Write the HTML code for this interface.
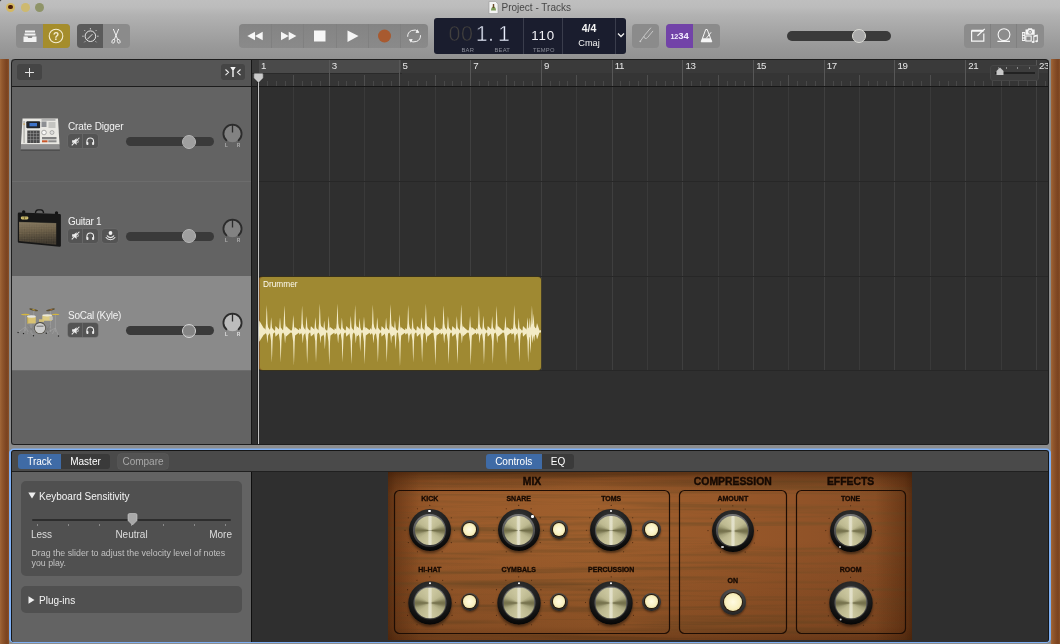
<!DOCTYPE html>
<html lang="en">
<head>
<meta charset="utf-8">
<title>Project - Tracks</title>
<style>
*{box-sizing:border-box;margin:0;padding:0}
html,body{width:1060px;height:644px;overflow:hidden}
body{position:relative;will-change:transform;font-family:"Liberation Sans",sans-serif;background:#8c8c8c;color:#fff}
.abs{position:absolute}
i{display:block}
#wood-l,#wood-r{position:absolute;top:59px;bottom:0;width:9px;background:linear-gradient(90deg,#a06639,#92582d 22%,#874e28 45%,#7d4521 68%,#7b431f 80%,#895028)}
#wood-l{left:0}
#wood-r{left:1051px}
#titlebar{position:absolute;left:0;top:0;width:1060px;height:60px;background:linear-gradient(#bfbfbf,#bcbcbc 12%,#b2b2b2 25%,#a6a6a6 50%,#9a9a9a 75%,#919191)}
.tl{position:absolute;top:2.7px;width:9px;height:9px;border-radius:50%}
.thin{-webkit-text-stroke:.55px #1a1d2e}
#title{position:absolute;top:1px;left:501.5px;font-size:10px;color:#474747;line-height:14px;white-space:nowrap}
.grp{position:absolute;top:24px;height:24px;border-radius:4px;overflow:hidden;background:#8b8b8b}
.grp>i{position:absolute;top:0;height:24px;display:block}
#lcd{position:absolute;left:434px;top:18px;width:191.5px;height:36px;background:#1a1d2e;border-radius:3px}
.lbl{font-size:5.8px;line-height:7px;color:#8b8e99;letter-spacing:.2px}
#tracks{position:absolute;left:11px;top:59px;width:1038px;height:386px;background:#2f2f2f;overflow:hidden;border-radius:4px 4px 3px 3px;border:1px solid #1c1c1c;border-width:0}
#tracks:after{content:"";position:absolute;left:0;top:0;right:0;bottom:0;border:1px solid #1e1e1e;border-radius:4px 4px 3px 3px;pointer-events:none}
#thead{position:absolute;left:0;top:0;width:240px;height:386px;background:#636363}
#thead-top{position:absolute;left:0;top:0;width:240px;height:28px;background:#555;border-bottom:1px solid #1c1c1c}
.sbtn{position:absolute;background:#454545;border-radius:3px}
.row{position:absolute;left:0;width:240px;border-bottom:1px solid #6c6c6c}
.row .name{position:absolute;left:57px;font-size:10px;line-height:12px;color:#f2f2f2;white-space:nowrap;letter-spacing:-.1px}
.ms{position:absolute;height:14px;border-radius:3px;background:#545454;box-shadow:0 0 0 .5px #6c6c6c}
.ms>i{position:absolute;left:14px;top:0;width:1px;height:14px;background:#666}
#divider{position:absolute;left:240px;top:0;width:7px;height:386px;background:#2f2f2f;border-left:1px solid #161616}
.rn{font-size:9.7px;line-height:12px;color:#e8e8e8;letter-spacing:-.4px}
#region{position:absolute;width:282px;height:93px;background:#9f8932;border-radius:3px;overflow:hidden;box-shadow:0 0 0 .5px #4a3f14,inset 1px 0 0 rgba(125,65,25,.7)}
#bottom{position:absolute;left:9px;top:449px;width:1042px;height:194.2px;border-radius:5px;background:#7fb0f4;padding:1px 2px 1.4px;box-shadow:0 -.5px 0 #7fb0f4}
#binner{position:relative;width:1038px;height:191.8px;border-radius:3px;background:#2f2f2f;border:1px solid #161616;border-bottom-width:0;overflow:hidden}
#tabbar{position:absolute;left:0;top:0;width:1036px;height:21px;background:#4a4a4a;border-bottom:1px solid #202020}
#insp{position:absolute;left:0;top:21px;width:240px;height:172px;background:#636363;border-right:1px solid #0e0e0e}
.seg{position:absolute;top:3px;height:15px;font-size:10px;line-height:15px;text-align:center;color:#fff}
.card{position:absolute;left:9px;width:220.5px;background:#505050;border-radius:5px}
.sl{font-size:10px;line-height:12px;color:#dcdcdc}
.kn{position:absolute;width:42px;height:42px;border-radius:50%;background:radial-gradient(circle at 50% 30%,#3c3c3c,#1a1a1a 55%,#060606 80%);box-shadow:0 2px 2.5px rgba(0,0,0,.45)}
.kn>b{position:absolute;left:4.7px;top:4.9px;width:32.6px;height:32.6px;border-radius:50%;background:linear-gradient(#777,#333)}
.kn>b:after{content:"";position:absolute;left:1.5px;top:1.5px;right:1.5px;bottom:1.5px;border-radius:50%;background:linear-gradient(90deg,rgba(255,255,255,0) 42%,rgba(250,250,246,.45) 47%,rgba(250,250,246,.45) 53%,rgba(255,255,255,0) 58%),conic-gradient(#cfcba4 0deg,#c6c29a 30deg,#bdb990 55deg,#a5a27a 70deg,#807c57 82deg,#726f49 90deg,#807c57 98deg,#a5a27a 110deg,#bbb78e 128deg,#c3bf96 150deg,#cfcba4 180deg,#c3bf96 210deg,#bbb78e 232deg,#a5a27a 250deg,#807c57 262deg,#726f49 270deg,#807c57 278deg,#a5a27a 290deg,#bdb990 305deg,#c6c29a 330deg,#cfcba4 360deg)}
.kn>i{position:absolute;width:2.6px;height:2.6px;border-radius:50%;background:#fff}
.led{position:absolute;border-radius:50%;background:radial-gradient(circle at 50% 25%,#5c5c5c,#343434 60%,#1a1a1a);box-shadow:0 1.5px 2px rgba(0,0,0,.4)}
.led>b{position:absolute;border-radius:50%;background:radial-gradient(circle,#fffbe2 0,#f8f0c0 55%,#e6d48c 90%,#b79c58 100%);box-shadow:0 0 0 1px #2a1a08}
</style>
</head>
<body>
<div id="titlebar">
  <div class="tl" style="left:5.900px;background:#d4b862"><b style="position:absolute;left:2.300px;top:2.300px;width:4.400px;height:4.400px;border-radius:50%;background:#4c1e0a"></b></div>
  <div class="tl" style="left:20.500px;background:#cdb970"></div>
  <div class="tl" style="left:35.100px;background:#8f9468"></div>
  <i class="abs" style="left:0;top:0;width:2px;height:2px;background:radial-gradient(circle at 100% 100%,transparent 1.500px,#4a4a4a 2px)"></i>
  <svg class="abs" style="left:488px;top:1px" width="11" height="13" viewBox="0 0 11 13"><path d="M1 .5h6.5L10 3v9.500H1z" fill="#f4f4f4" stroke="#999" stroke-width=".6"/><path d="M3 9.500c0-2 1-4 2.500-4s2.500 2 2.500 4z" fill="#7c9a56"/><rect x="4.800" y="3" width="1.400" height="4" fill="#6b4a2a"/></svg>
  <div id="title">Project - Tracks</div>

  <!-- left button groups -->
  <div class="grp" style="left:16px;width:54px">
    <i style="left:27px;width:27px;background:#a58d2c"></i>
    <svg class="abs" style="left:6px;top:5px" width="16" height="15" viewBox="0 0 16 15"><path d="M3 1.500h10v2H3zM2.500 4.500h11v2h-11z" fill="#f2f2f2"/><path d="M1.500 7.500h4l.7 1.600h3.600l.7-1.600h4v5.500h-13z" fill="#f2f2f2"/></svg>
    <svg class="abs" style="left:31px;top:3px" width="18" height="18" viewBox="0 0 18 18"><circle cx="9" cy="9" r="6.800" fill="none" stroke="#f4ecd0" stroke-width="1.100"/><text x="9" y="12.600" font-family="Liberation Sans, sans-serif" font-size="10" font-weight="bold" fill="#f4ecd0" text-anchor="middle">?</text></svg>
  </div>
  <div class="grp" style="left:77px;width:53px">
    <i style="left:0;width:26px;background:#5b5b5b"></i>
    <svg class="abs" style="left:3px;top:2px" width="20" height="20" viewBox="0 0 20 20"><circle cx="10.400" cy="10.200" r="5.300" fill="none" stroke="#ececec" stroke-width=".95"/><path d="M7.200 13.400l5.200-5.200" stroke="#ececec" stroke-width=".95"/><g stroke="#d8d8d8" stroke-width=".9" stroke-linecap="round"><path d="M10.400 2.400v.7M4.600 4.400l.4.400M16.200 4.400l-.4.400M2.600 10.200h.7M17.500 10.200h.7M4.600 16l.4-.4M16.200 16l-.4-.4"/></g></svg>
    <svg class="abs" style="left:31px;top:3px" width="16" height="19" viewBox="0 0 16 19"><path d="M5.300 2l4.600 11M10.700 2L6.100 13" stroke="#f2f2f2" stroke-width="1" fill="none"/><ellipse cx="5.300" cy="14.300" rx="1.300" ry="2" fill="none" stroke="#f2f2f2" stroke-width=".9" transform="rotate(20 5.300 14.300)"/><ellipse cx="10.700" cy="14.300" rx="1.300" ry="2" fill="none" stroke="#f2f2f2" stroke-width=".9" transform="rotate(-20 10.700 14.300)"/></svg>
  </div>

  <!-- transport -->
  <div class="grp" style="left:239px;width:189px;background:linear-gradient(#848484,#8a8a8a)">
    <i style="left:32px;width:1px;background:#808080"></i><i style="left:64px;width:1px;background:#808080"></i><i style="left:97px;width:1px;background:#808080"></i><i style="left:129px;width:1px;background:#808080"></i><i style="left:161px;width:1px;background:#808080"></i>
    <svg class="abs" style="left:0;top:0" width="189" height="24" viewBox="0 0 189 24">
      <path d="M16 7.800v8.400L8.300 12zM23.700 7.800v8.400L16 12z" fill="#f6f6f6"/>
      <path d="M42 7.800v8.400L49.700 12zM49.700 7.800v8.400L57.400 12z" fill="#f6f6f6"/>
      <rect x="75" y="6.500" width="11.500" height="11" fill="#f6f6f6"/>
      <path d="M108.500 6.500v11.500L119.500 12z" fill="#f6f6f6"/>
      <circle cx="145.500" cy="12" r="6.500" fill="#a85a30"/>
      <g fill="none" stroke="#f2f2f2" stroke-width="1"><path d="M168.700 12.800a6.400 6.400 0 0 1 11-4.800"/><path d="M181.500 11.200a6.400 6.400 0 0 1 -11 4.800"/></g>
      <path d="M178.300 5.300l2 3.400-3.800.2z" fill="#f2f2f2"/><path d="M171.900 18.700l-2-3.400 3.800-.2z" fill="#f2f2f2"/>
    </svg>
  </div>

  <!-- LCD -->
  <div id="lcd">
    <i class="abs" style="left:89px;top:0;width:1px;height:36px;background:#3a3d4c"></i>
    <i class="abs" style="left:128px;top:0;width:1px;height:36px;background:#3a3d4c"></i>
    <i class="abs" style="left:181px;top:0;width:1px;height:36px;background:#3a3d4c"></i>
    <div class="abs thin" style="left:14.500px;top:4.300px;font-size:21.500px;line-height:24px;color:#42403e;letter-spacing:.6px">00</div>
    <div class="abs thin" style="left:41.800px;top:4.300px;font-size:21.500px;line-height:24px;color:#e9eefc;letter-spacing:.15px;word-spacing:-2.200px;white-space:nowrap">1. 1</div>
    <div class="abs lbl" style="left:27.500px;top:28.500px">BAR</div>
    <div class="abs lbl" style="left:60.500px;top:28.500px">BEAT</div>
    <div class="abs" style="left:97.300px;top:8.800px;font-size:13.300px;line-height:18px;color:#f2f2f6;letter-spacing:.85px">110</div>
    <div class="abs lbl" style="left:99px;top:28.500px">TEMPO</div>
    <div class="abs" style="left:128px;top:4px;width:54px;text-align:center;font-size:10.500px;line-height:12px;color:#f4f4f4;font-weight:bold">4/4</div>
    <div class="abs" style="left:128px;top:19.300px;width:54px;text-align:center;font-size:9.200px;line-height:12px;color:#f4f4f4">Cmaj</div>
    <svg class="abs" style="left:183px;top:13px" width="8" height="8" viewBox="0 0 8 8"><path d="M1 2.500l3 3 3-3" fill="none" stroke="#f0f0f0" stroke-width="1.300"/></svg>
  </div>

  <!-- tuner -->
  <div class="grp" style="left:632.300px;width:27px;background:#8b8b8b">
    <svg class="abs" style="left:0;top:0" width="27" height="24" viewBox="0 0 27 24"><g fill="none" stroke="#cacaca" stroke-width=".95" stroke-linecap="round"><path d="M8.500 17l3.200-4.500"/><path d="M18.700 4l-6.200 7.300q-1.400 1.700.2 2.900q1.500 1.100 2.900-.7l5.200-6.300"/></g><circle cx="8.300" cy="17.300" r=".9" fill="#cacaca"/></svg>
  </div>
  <!-- count-in / metronome -->
  <div class="grp" style="left:666px;width:54px;background:#8b8b8b">
    <i style="left:0;width:27px;background:#7243a8"></i>
    <div class="abs" style="left:0;top:5px;width:27px;text-align:center;font-size:9.500px;line-height:14px;color:#f3ecff;white-space:nowrap;font-weight:bold;letter-spacing:-.1px"><span style="font-size:7.200px">12</span>34</div>
    <svg class="abs" style="left:27px;top:0" width="27" height="24" viewBox="0 0 27 24"><path d="M12.700 5.500h1.500l4.600 12.300H8.200z" fill="none" stroke="#f6f6f6" stroke-width="1"/><path d="M9.300 14.200h8.300l1.300 3.700H8z" fill="#f6f6f6"/><path d="M13.300 14.300l4.800-6" stroke="#f6f6f6" stroke-width="1"/></svg>
  </div>

  <!-- master volume -->
  <div class="abs" style="left:787px;top:31px;width:104px;height:10px;border-radius:5px;background:#3a3a3a"></div>
  <div class="abs" style="left:852px;top:29px;width:14px;height:14px;border-radius:50%;background:#a9a9a9;border:1px solid #deded8"></div>

  <!-- right group -->
  <div class="grp" style="left:964px;width:80px;background:#8c8c8c">
    <i style="left:26px;width:1px;background:#808080"></i><i style="left:52px;width:1px;background:#808080"></i>
    <svg class="abs" style="left:0;top:0" width="80" height="24" viewBox="0 0 80 24">
      <g fill="none" stroke="#f6f6f6"><path d="M7.500 6.800h12" stroke-width="2"/><path d="M7.600 6.500v10.600h12.200V9.500" stroke-width="1.200"/><path d="M13.400 11.700l7.400-6.800" stroke-width="1.200"/></g>
      <g fill="none" stroke="#f6f6f6" stroke-width="1.100"><circle cx="40" cy="10.600" r="5.900"/><path d="M33.400 17.400h12.600"/></g>
      <g fill="#f6f6f6"><rect x="58" y="8" width="3.200" height="9"/><rect x="58.800" y="9.300" width="1.500" height="1.400" fill="#8c8c8c"/><rect x="58.800" y="12" width="1.500" height="1.400" fill="#8c8c8c"/><rect x="58.800" y="14.600" width="1.500" height="1.400" fill="#8c8c8c"/>
      <path d="M61.500 5.500h2l.8-1.300h3.600l.8 1.300h2v5.300h-9.200z"/><circle cx="66.100" cy="7.900" r="1.800" fill="#8c8c8c"/><circle cx="66.100" cy="7.900" r=".8"/>
      <rect x="61.800" y="12" width="5.400" height="5" fill="none" stroke="#f6f6f6" stroke-width="1.100"/>
      <path d="M69.300 11.500l4.500-.9v6.300h-1v-4.300l-2.500.5v5h-1z"/><ellipse cx="69.100" cy="18" rx="1.500" ry="1.100"/><ellipse cx="72.600" cy="17.200" rx="1.400" ry="1.050"/></g>
    </svg>
  </div>
</div>
<div id="wood-l"></div><div id="wood-r"></div>
<div id="tracks">
<div id="thead">
<div id="thead-top"><div class="sbtn" style="left:6px;top:5px;width:25px;height:16px"><svg class="abs" style="left:7px;top:3px" width="11" height="11" viewBox="0 0 11 11" shape-rendering="crispEdges"><rect x="5" y="1" width="1" height="9" fill="#e4e4e4"/><rect x="1" y="5" width="9" height="1" fill="#e4e4e4"/></svg></div>
<div class="sbtn" style="left:210px;top:5px;width:24px;height:16px"><svg class="abs" style="left:2px;top:2px" width="20" height="12" viewBox="0 0 20 12"><path d="M2.500 3.500l3 2.800-3 2.800M17.500 3.500l-3 2.800 3 2.800" fill="none" stroke="#eee" stroke-width="1.100"/><path d="M7.300 1h5.400L10.700 4.200V11H9.300V4.200z" fill="#f4f4f4"/></svg></div></div>
<div class="row" style="top:28px;height:95px;background:transparent"><div class="abs" style="left:0;top:0px"><svg class="abs" style="left:9px;top:30px" width="42" height="36" viewBox="0 0 42 36"><path d="M2.500 1.500h35.500l1.500 26H1z" fill="#e9e8e3"/><path d="M1 27.500h38.500l.3 5.500H.7z" fill="#8e8e8e"/><rect x=".7" y="32.500" width="39.200" height="1" fill="#3d3d3d"/><rect x="6.300" y="4.300" width="13.800" height="7" rx="1" fill="#23262b"/><rect x="9.500" y="6" width="7.500" height="3.300" fill="#3f74c9"/><rect x="7.300" y="13.500" width="12.400" height="12.500" fill="#4b4b4b"/><rect x="10.15" y="13.500" width=".5" height="12.500" fill="#9a9a9a"/><rect x="7.300" y="16.35" width="12.400" height=".5" fill="#9a9a9a"/><rect x="13.25" y="13.500" width=".5" height="12.500" fill="#9a9a9a"/><rect x="7.300" y="19.45" width="12.400" height=".5" fill="#9a9a9a"/><rect x="16.35" y="13.500" width=".5" height="12.500" fill="#9a9a9a"/><rect x="7.300" y="22.55" width="12.400" height=".5" fill="#9a9a9a"/><rect x="3.300" y="4" width="1.600" height="22" fill="#b9b8b2"/><rect x="3.500" y="6.500" width="1.200" height="1.200" fill="#d79a2b"/><rect x="21.500" y="4.500" width="5" height="5.500" fill="#8d8f93"/><rect x="28.500" y="5" width="7" height="6" fill="#c4c4c0"/><rect x="21.500" y="2.300" width="14" height="1.300" fill="#9fa0a0"/><circle cx="24" cy="15.500" r="2.300" fill="#f7f7f5" stroke="#8a8a8a" stroke-width=".7"/><circle cx="32" cy="15.500" r="2" fill="#dcdcda" stroke="#8a8a8a" stroke-width=".6"/><rect x="22" y="20" width="14.500" height="2.300" fill="#7f7f7f"/><rect x="22" y="23.300" width="5.500" height="2" fill="#c8562a"/><rect x="28.300" y="23.300" width="8.200" height="2" fill="#8b8b8b"/></svg><div class="name" style="top:34px;letter-spacing:-0.1px">Crate Digger</div><div class="ms" style="left:57px;top:47px;width:30px"><svg class="abs" style="left:3px;top:2.500px" width="9" height="9" viewBox="0 0 12 12"><path d="M1.500 4.300h2.500L7.500 1.500v9L4 7.700H1.500z" fill="#ececec"/><path d="M1 11.200L11.200 1" stroke="#ececec" stroke-width="1.400"/><path d="M8.800 4a3 3 0 0 1 0 4" fill="none" stroke="#ececec" stroke-width="1.100"/></svg><i></i><svg class="abs" style="left:17.300px;top:2px" width="10.500" height="10.500" viewBox="0 0 12 12"><path d="M2.200 8.500V6a3.800 3.800 0 0 1 7.600 0v2.500" fill="none" stroke="#ececec" stroke-width="1.250"/><rect x="1.600" y="6.800" width="2.300" height="3.500" rx=".9" fill="#ececec"/><rect x="8.100" y="6.800" width="2.300" height="3.500" rx=".9" fill="#ececec"/></svg></div><div class="abs" style="left:115px;top:50px;width:88px;height:9px;border-radius:4.500px;background:#3a3a3a"></div><div class="abs" style="left:171px;top:47.500px;width:14px;height:14px;border-radius:50%;background:#9f9f9f;border:1px solid #b8b8b8"></div><svg class="abs" style="left:209px;top:34px" width="25" height="30" viewBox="0 0 25 30"><circle cx="12.500" cy="12.700" r="8.600" fill="#828282"/><path d="M6.9 19.87A9.100 9.100 0 1 1 18.1 19.87" fill="none" stroke="#2c2c2c" stroke-width="1.800"/><path d="M12.500 3.500v8" stroke="#2c2c2c" stroke-width="1.300"/><text x="5" y="26" font-family="Liberation Sans, sans-serif" font-size="4.500" fill="#b4b4b4" font-weight="bold">L</text><text x="17" y="26" font-family="Liberation Sans, sans-serif" font-size="4.500" fill="#b4b4b4" font-weight="bold">R</text></svg></div></div>
<div class="row" style="top:123px;height:95px;background:transparent"><div class="abs" style="left:0;top:-0.33px"><svg class="abs" style="left:5px;top:26px" width="46" height="40" viewBox="0 0 46 40"><defs><linearGradient id="ampg" x1="0" y1="0" x2="0.15" y2="1"><stop offset="0" stop-color="#8a7c63"/><stop offset=".45" stop-color="#76684f"/><stop offset="1" stop-color="#4a4236"/></linearGradient><pattern id="ampp" width="2.4" height="2.4" patternUnits="userSpaceOnUse" patternTransform="rotate(45)"><rect width="1.2" height="1.2" fill="#1c1a16" opacity=".5"/><rect x="1.2" y="1.200" width="1.200" height="1.200" fill="#1c1a16" opacity=".5"/></pattern><linearGradient id="ampf" x1="0" y1="0" x2="0" y2="1"><stop offset="0" stop-color="#fff" stop-opacity="0"/><stop offset=".35" stop-color="#fff" stop-opacity=".15"/><stop offset="1" stop-color="#fff" stop-opacity="1"/></linearGradient><mask id="ampm"><rect width="46" height="40" fill="url(#ampf)"/></mask></defs><path d="M19.400 5q.3-3.200 2.600-3.200h3q2.300 0 2.600 3.300" fill="none" stroke="#161616" stroke-width="1.300"/><circle cx="7.700" cy="3.900" r="1.700" fill="#141414"/><circle cx="40.500" cy="5" r="1.700" fill="#141414"/><path d="M3 4.500L43.700 6q1.200.1 1.200 1.300V37.500q0 1.400-1.400 1.300L3 34.800Q1.800 34.700 1.800 33.500V5.700Q1.800 4.500 3 4.500z" fill="#171717"/><path d="M3 14.300L40.200 15.500V36.800L3 33z" fill="url(#ampg)"/><path d="M3 14.300L40.200 15.500V36.800L3 33z" fill="url(#ampp)" mask="url(#ampm)"/><path d="M3 14.300L40.200 15.500" stroke="#8d8164" stroke-width=".6"/><rect x="4.800" y="8.400" width="7.600" height="3" rx="1.300" fill="#d6c678"/><rect x="8.300" y="8.400" width=".7" height="3" fill="#5b4e1c"/><rect x="5.800" y="9.600" width="5.600" height=".6" fill="#8a7a34"/></svg><div class="name" style="top:34px;letter-spacing:-0.3px">Guitar 1</div><div class="ms" style="left:57px;top:47px;width:30px"><svg class="abs" style="left:3px;top:2.500px" width="9" height="9" viewBox="0 0 12 12"><path d="M1.500 4.300h2.500L7.500 1.500v9L4 7.700H1.500z" fill="#ececec"/><path d="M1 11.200L11.200 1" stroke="#ececec" stroke-width="1.400"/><path d="M8.800 4a3 3 0 0 1 0 4" fill="none" stroke="#ececec" stroke-width="1.100"/></svg><i></i><svg class="abs" style="left:17.300px;top:2px" width="10.500" height="10.500" viewBox="0 0 12 12"><path d="M2.200 8.500V6a3.800 3.800 0 0 1 7.600 0v2.500" fill="none" stroke="#ececec" stroke-width="1.250"/><rect x="1.600" y="6.800" width="2.300" height="3.500" rx=".9" fill="#ececec"/><rect x="8.100" y="6.800" width="2.300" height="3.500" rx=".9" fill="#ececec"/></svg></div><div class="ms" style="left:91px;top:47px;width:16px"><svg class="abs" style="left:1.500px;top:.500px" width="13" height="13" viewBox="0 0 13 13"><circle cx="6.500" cy="4" r="1.900" fill="#f0f0f0"/><path d="M3 6.600a4 4 0 0 0 7 0M1.800 8.300a5.800 5.800 0 0 0 9.400 0" fill="none" stroke="#ececec" stroke-width="1.100"/></svg></div><div class="abs" style="left:115px;top:50px;width:88px;height:9px;border-radius:4.500px;background:#3a3a3a"></div><div class="abs" style="left:171px;top:47.500px;width:14px;height:14px;border-radius:50%;background:#9f9f9f;border:1px solid #b8b8b8"></div><svg class="abs" style="left:209px;top:34px" width="25" height="30" viewBox="0 0 25 30"><circle cx="12.500" cy="12.700" r="8.600" fill="#828282"/><path d="M6.9 19.87A9.100 9.100 0 1 1 18.1 19.87" fill="none" stroke="#2c2c2c" stroke-width="1.800"/><path d="M12.500 3.500v8" stroke="#2c2c2c" stroke-width="1.300"/><text x="5" y="26" font-family="Liberation Sans, sans-serif" font-size="4.500" fill="#b4b4b4" font-weight="bold">L</text><text x="17" y="26" font-family="Liberation Sans, sans-serif" font-size="4.500" fill="#b4b4b4" font-weight="bold">R</text></svg></div></div>
<div class="row" style="top:217px;height:95px;background:#8a8a8a"><div class="abs" style="left:0;top:0.33px"><svg class="abs" style="left:5px;top:29px" width="48" height="34" viewBox="0 0 48 34"><g stroke="#a3a3a3" stroke-width=".7" fill="none" opacity=".9"><path d="M9.300 9.500V26M9.300 22L2 27.300M9.300 22L7.500 28.300M9.300 22l3 5M39.400 9.500V27M39.400 23l-9 5M39.400 23l3.100 7.800M39.400 23l-3 6M15 18.500v9l2.500 2.800M15 25l-4 3.500M34.500 16v11M17.700 5.500v6M34.500 5.500v5"/></g><g stroke="#7b7b7b" stroke-width=".6" fill="none"><path d="M11.500 20l7 8M19 20l-7 8M29 20l5 8M34 20l-5 8M12 24h7M29 24h6"/></g><ellipse cx="17.700" cy="4.800" rx="4.600" ry=".9" fill="#5b4f30" transform="rotate(13 17.700 4.800)"/><ellipse cx="17.700" cy="4.800" rx="1.600" ry=".5" fill="#c9a63c" transform="rotate(13 17.700 4.800)"/><ellipse cx="34.500" cy="4.800" rx="4.600" ry=".9" fill="#5b4f30" transform="rotate(-13 34.500 4.800)"/><ellipse cx="35" cy="4.700" rx="1.600" ry=".5" fill="#a66a30" transform="rotate(-13 35 4.700)"/><ellipse cx="9.300" cy="9.400" rx="4.300" ry=".75" fill="#d3b53f"/><ellipse cx="39.600" cy="9.400" rx="3.700" ry=".6" fill="#d3b53f"/><rect x="11" y="11.500" width="8.800" height="7" rx=".8" fill="#d9c272"/><rect x="11" y="11.500" width="1.200" height="7" fill="#b9a65a"/><ellipse cx="15.400" cy="11.500" rx="4.400" ry="1.200" fill="#e4e4e0"/><rect x="26.300" y="10.300" width="9.800" height="5.500" rx=".8" fill="#dccb84"/><ellipse cx="31.200" cy="10.300" rx="4.900" ry="1.100" fill="#e9e7d8"/><rect x="33.500" y="11.500" width="3.600" height="3.500" fill="#bdbdbd" opacity=".8"/><rect x="23" y="14.300" width="5" height="2.600" fill="#d8c473" opacity=".9"/><circle cx="24" cy="23" r="5.900" fill="#4e4a40"/><circle cx="24" cy="23.100" r="5.200" fill="#cdcdcd"/><path d="M20.500 21.200h7" stroke="#444" stroke-width=".7"/><g fill="#242424"><circle cx="2.100" cy="27.500" r=".7"/><circle cx="7.500" cy="28.500" r=".7"/><circle cx="17.500" cy="30.700" r=".7"/><circle cx="30.300" cy="28.300" r=".7"/><circle cx="42.500" cy="31" r=".7"/></g></svg><div class="name" style="top:34px;letter-spacing:-0.25px">SoCal (Kyle)</div><div class="ms" style="left:57px;top:47px;width:30px"><svg class="abs" style="left:3px;top:2.500px" width="9" height="9" viewBox="0 0 12 12"><path d="M1.500 4.300h2.500L7.500 1.500v9L4 7.700H1.500z" fill="#ececec"/><path d="M1 11.200L11.200 1" stroke="#ececec" stroke-width="1.400"/><path d="M8.800 4a3 3 0 0 1 0 4" fill="none" stroke="#ececec" stroke-width="1.100"/></svg><i></i><svg class="abs" style="left:17.300px;top:2px" width="10.500" height="10.500" viewBox="0 0 12 12"><path d="M2.200 8.500V6a3.800 3.800 0 0 1 7.600 0v2.500" fill="none" stroke="#ececec" stroke-width="1.250"/><rect x="1.600" y="6.800" width="2.300" height="3.500" rx=".9" fill="#ececec"/><rect x="8.100" y="6.800" width="2.300" height="3.500" rx=".9" fill="#ececec"/></svg></div><div class="abs" style="left:115px;top:50px;width:88px;height:9px;border-radius:4.500px;background:#3a3a3a"></div><div class="abs" style="left:171px;top:47.500px;width:14px;height:14px;border-radius:50%;background:rgba(150,150,150,.82);border:1px solid #d6d6d6"></div><svg class="abs" style="left:209px;top:34px" width="25" height="30" viewBox="0 0 25 30"><circle cx="12.500" cy="12.700" r="8.600" fill="#bcbcbc"/><path d="M6.9 19.87A9.100 9.100 0 1 1 18.1 19.87" fill="none" stroke="#2c2c2c" stroke-width="1.800"/><path d="M12.500 3.500v8" stroke="#2c2c2c" stroke-width="1.300"/><text x="5" y="26" font-family="Liberation Sans, sans-serif" font-size="4.500" fill="#e6e6e6" font-weight="bold">L</text><text x="17" y="26" font-family="Liberation Sans, sans-serif" font-size="4.500" fill="#e6e6e6" font-weight="bold">R</text></svg></div></div>
</div>
<div id="divider"></div>
<div class="abs" style="left:241px;top:1px;width:797px;height:13px;background:#3a3a3a"></div>
<div class="abs" style="left:241px;top:14px;width:797px;height:13px;background:#353535"></div>
<div class="abs" style="left:248px;top:1px;width:142px;height:13px;background:#4a4a4a;border-radius:0 0 3px 0"></div>
<div class="abs" style="left:241px;top:14px;width:150px;height:1px;background:#2a2a2a"></div>
<svg class="abs" style="left:0;top:0" width="1038" height="386" viewBox="0 0 1038 386" shape-rendering="crispEdges"><rect x="256" y="22" width="1" height="5" fill="#484848"/><rect x="265" y="22" width="1" height="5" fill="#484848"/><rect x="274" y="22" width="1" height="5" fill="#484848"/><rect x="282" y="28" width="1" height="283" fill="#3a3a3a"/><rect x="282" y="16" width="1" height="11" fill="#4e4e4e"/><rect x="291" y="22" width="1" height="5" fill="#484848"/><rect x="300" y="22" width="1" height="5" fill="#484848"/><rect x="309" y="22" width="1" height="5" fill="#484848"/><rect x="318" y="28" width="1" height="283" fill="#3f3f3f"/><rect x="318" y="1" width="1" height="26" fill="#575757"/><rect x="327" y="22" width="1" height="5" fill="#484848"/><rect x="335" y="22" width="1" height="5" fill="#484848"/><rect x="344" y="22" width="1" height="5" fill="#484848"/><rect x="353" y="28" width="1" height="283" fill="#3a3a3a"/><rect x="353" y="16" width="1" height="11" fill="#4e4e4e"/><rect x="362" y="22" width="1" height="5" fill="#484848"/><rect x="371" y="22" width="1" height="5" fill="#484848"/><rect x="380" y="22" width="1" height="5" fill="#484848"/><rect x="388" y="28" width="1" height="283" fill="#3f3f3f"/><rect x="388" y="1" width="1" height="26" fill="#575757"/><rect x="397" y="22" width="1" height="5" fill="#484848"/><rect x="406" y="22" width="1" height="5" fill="#484848"/><rect x="415" y="22" width="1" height="5" fill="#484848"/><rect x="424" y="28" width="1" height="283" fill="#3a3a3a"/><rect x="424" y="16" width="1" height="11" fill="#4e4e4e"/><rect x="433" y="22" width="1" height="5" fill="#484848"/><rect x="441" y="22" width="1" height="5" fill="#484848"/><rect x="450" y="22" width="1" height="5" fill="#484848"/><rect x="459" y="28" width="1" height="283" fill="#3f3f3f"/><rect x="459" y="1" width="1" height="26" fill="#575757"/><rect x="468" y="22" width="1" height="5" fill="#484848"/><rect x="477" y="22" width="1" height="5" fill="#484848"/><rect x="486" y="22" width="1" height="5" fill="#484848"/><rect x="495" y="28" width="1" height="283" fill="#3a3a3a"/><rect x="495" y="16" width="1" height="11" fill="#4e4e4e"/><rect x="503" y="22" width="1" height="5" fill="#484848"/><rect x="512" y="22" width="1" height="5" fill="#484848"/><rect x="521" y="22" width="1" height="5" fill="#484848"/><rect x="530" y="28" width="1" height="283" fill="#3f3f3f"/><rect x="530" y="1" width="1" height="26" fill="#575757"/><rect x="539" y="22" width="1" height="5" fill="#484848"/><rect x="548" y="22" width="1" height="5" fill="#484848"/><rect x="556" y="22" width="1" height="5" fill="#484848"/><rect x="565" y="28" width="1" height="283" fill="#3a3a3a"/><rect x="565" y="16" width="1" height="11" fill="#4e4e4e"/><rect x="574" y="22" width="1" height="5" fill="#484848"/><rect x="583" y="22" width="1" height="5" fill="#484848"/><rect x="592" y="22" width="1" height="5" fill="#484848"/><rect x="601" y="28" width="1" height="283" fill="#3f3f3f"/><rect x="601" y="1" width="1" height="26" fill="#575757"/><rect x="609" y="22" width="1" height="5" fill="#484848"/><rect x="618" y="22" width="1" height="5" fill="#484848"/><rect x="627" y="22" width="1" height="5" fill="#484848"/><rect x="636" y="28" width="1" height="283" fill="#3a3a3a"/><rect x="636" y="16" width="1" height="11" fill="#4e4e4e"/><rect x="645" y="22" width="1" height="5" fill="#484848"/><rect x="654" y="22" width="1" height="5" fill="#484848"/><rect x="662" y="22" width="1" height="5" fill="#484848"/><rect x="671" y="28" width="1" height="283" fill="#3f3f3f"/><rect x="671" y="1" width="1" height="26" fill="#575757"/><rect x="680" y="22" width="1" height="5" fill="#484848"/><rect x="689" y="22" width="1" height="5" fill="#484848"/><rect x="698" y="22" width="1" height="5" fill="#484848"/><rect x="707" y="28" width="1" height="283" fill="#3a3a3a"/><rect x="707" y="16" width="1" height="11" fill="#4e4e4e"/><rect x="716" y="22" width="1" height="5" fill="#484848"/><rect x="724" y="22" width="1" height="5" fill="#484848"/><rect x="733" y="22" width="1" height="5" fill="#484848"/><rect x="742" y="28" width="1" height="283" fill="#3f3f3f"/><rect x="742" y="1" width="1" height="26" fill="#575757"/><rect x="751" y="22" width="1" height="5" fill="#484848"/><rect x="760" y="22" width="1" height="5" fill="#484848"/><rect x="769" y="22" width="1" height="5" fill="#484848"/><rect x="777" y="28" width="1" height="283" fill="#3a3a3a"/><rect x="777" y="16" width="1" height="11" fill="#4e4e4e"/><rect x="786" y="22" width="1" height="5" fill="#484848"/><rect x="795" y="22" width="1" height="5" fill="#484848"/><rect x="804" y="22" width="1" height="5" fill="#484848"/><rect x="813" y="28" width="1" height="283" fill="#3f3f3f"/><rect x="813" y="1" width="1" height="26" fill="#575757"/><rect x="822" y="22" width="1" height="5" fill="#484848"/><rect x="830" y="22" width="1" height="5" fill="#484848"/><rect x="839" y="22" width="1" height="5" fill="#484848"/><rect x="848" y="28" width="1" height="283" fill="#3a3a3a"/><rect x="848" y="16" width="1" height="11" fill="#4e4e4e"/><rect x="857" y="22" width="1" height="5" fill="#484848"/><rect x="866" y="22" width="1" height="5" fill="#484848"/><rect x="875" y="22" width="1" height="5" fill="#484848"/><rect x="883" y="28" width="1" height="283" fill="#3f3f3f"/><rect x="883" y="1" width="1" height="26" fill="#575757"/><rect x="892" y="22" width="1" height="5" fill="#484848"/><rect x="901" y="22" width="1" height="5" fill="#484848"/><rect x="910" y="22" width="1" height="5" fill="#484848"/><rect x="919" y="28" width="1" height="283" fill="#3a3a3a"/><rect x="919" y="16" width="1" height="11" fill="#4e4e4e"/><rect x="928" y="22" width="1" height="5" fill="#484848"/><rect x="937" y="22" width="1" height="5" fill="#484848"/><rect x="945" y="22" width="1" height="5" fill="#484848"/><rect x="954" y="28" width="1" height="283" fill="#3f3f3f"/><rect x="954" y="1" width="1" height="26" fill="#575757"/><rect x="963" y="22" width="1" height="5" fill="#484848"/><rect x="972" y="22" width="1" height="5" fill="#484848"/><rect x="981" y="22" width="1" height="5" fill="#484848"/><rect x="990" y="28" width="1" height="283" fill="#3a3a3a"/><rect x="990" y="16" width="1" height="11" fill="#4e4e4e"/><rect x="998" y="22" width="1" height="5" fill="#484848"/><rect x="1007" y="22" width="1" height="5" fill="#484848"/><rect x="1016" y="22" width="1" height="5" fill="#484848"/><rect x="1025" y="28" width="1" height="283" fill="#3f3f3f"/><rect x="1025" y="1" width="1" height="26" fill="#575757"/><rect x="1034" y="22" width="1" height="5" fill="#484848"/><rect x="248" y="122" width="790" height="1" fill="#272727"/><rect x="248" y="217" width="790" height="1" fill="#272727"/><rect x="248" y="311" width="790" height="1" fill="#272727"/><rect x="240" y="27" width="798" height="1" fill="#171717"/></svg>
<div class="abs rn" style="left:250.1px;top:.900px">1</div>
<div class="abs rn" style="left:320.82px;top:.900px">3</div>
<div class="abs rn" style="left:391.54px;top:.900px">5</div>
<div class="abs rn" style="left:462.26px;top:.900px">7</div>
<div class="abs rn" style="left:532.98px;top:.900px">9</div>
<div class="abs rn" style="left:603.7px;top:.900px">11</div>
<div class="abs rn" style="left:674.42px;top:.900px">13</div>
<div class="abs rn" style="left:745.14px;top:.900px">15</div>
<div class="abs rn" style="left:815.86px;top:.900px">17</div>
<div class="abs rn" style="left:886.58px;top:.900px">19</div>
<div class="abs rn" style="left:957.3px;top:.900px">21</div>
<div class="abs rn" style="left:1028.02px;top:.900px">23</div>
<div id="region" style="left:248px;top:218px"><svg class="abs" style="left:0;top:0" width="282" height="93" viewBox="0 0 282 93"><path d="M0,50.83 0.25,43.58 0.5,44.01 0.75,44.43 1,44.85 1.25,45.28 1.5,45.7 1.75,46.12 2,46.55 2.25,46.97 2.5,47.39 2.75,47.82 3,48.24 3.25,48.66 3.5,49.08 3.75,49.51 4,49.93 4.25,50.35 4.5,50.78 4.75,51.2 5,51.12 5.25,51.23 5.5,51.48 5.75,51.73 6,51.98 6.25,52.23 6.5,52.48 6.75,52.73 7,52.98 7.25,53.22 7.5,53.16 7.75,53.25 8,53.31 8.25,53.18 8.5,51.8 8.75,50.01 9,50.33 9.25,50.66 9.5,50.98 9.75,51.3 10,51.62 10.25,51.94 10.5,52.26 10.75,52.58 11,52.91 11.25,53.23 11.5,53.19 11.75,53.46 12,53.42 12.25,53.12 12.5,53.51 12.75,53.39 13,51.93 13.25,51.1 13.5,51.4 13.75,51.69 14,51.98 14.25,52.27 14.5,52.56 14.75,52.85 15,53.15 15.25,53.44 15.5,53.57 15.75,53.5 16,53.4 16.25,51.11 16.5,49.02 16.75,49.27 17,49.52 17.25,49.77 17.5,50.02 17.75,50.27 18,50.52 18.25,50.77 18.5,51.02 18.75,51.27 19,51.52 19.25,51.77 19.5,52.02 19.75,52.27 20,52.52 20.25,52.77 20.5,53.02 20.75,53.27 21,53.44 21.25,53.19 21.5,53.17 21.75,52.46 22,51 22.25,51.29 22.5,51.58 22.75,51.87 23,52.17 23.25,52.46 23.5,52.75 23.75,53.04 24,53.33 24.25,53.29 24.5,53.18 24.75,53.27 25,53.56 25.25,53.15 25.5,53.22 25.75,53.51 26,53.43 26.25,53.11 26.5,51.93 26.75,49.64 27,49.16 27.25,49.39 27.5,49.62 27.75,49.85 28,50.08 28.25,50.31 28.5,50.54 28.75,50.77 29,51 29.25,51.23 29.5,51.46 29.75,51.69 30,51.91 30.25,52.14 30.5,52.37 30.75,52.6 31,52.83 31.25,53.06 31.5,53.29 31.75,53.38 32,53.6 32.25,53.51 32.5,53.24 32.75,53.44 33,53.32 33.25,53.55 33.5,53.48 33.75,53.21 34,53.32 34.25,53.14 34.5,53.29 34.75,53.34 35,53.37 35.25,53.08 35.5,51.2 35.75,50.07 36,50.25 36.25,50.44 36.5,50.63 36.75,50.82 37,51 37.25,51.19 37.5,51.38 37.75,51.57 38,51.75 38.25,51.94 38.5,52.13 38.75,52.32 39,52.5 39.25,52.69 39.5,52.88 39.75,53.07 40,53.22 40.25,51.76 40.5,51.12 40.75,51.37 41,51.62 41.25,51.87 41.5,52.12 41.75,52.37 42,52.62 42.25,52.87 42.5,53.12 42.75,53.31 43,53.56 43.25,53.26 43.5,53.56 43.75,52.62 44,50.75 44.25,50.19 44.5,50.51 44.75,50.84 45,51.16 45.25,51.48 45.5,51.8 45.75,52.12 46,52.44 46.25,52.76 46.5,53.09 46.75,53.41 47,53.47 47.25,53.23 47.5,53.51 47.75,53.13 48,53.19 48.25,52.57 48.5,51.12 48.75,51.27 49,51.56 49.25,51.85 49.5,52.14 49.75,52.44 50,52.73 50.25,53.02 50.5,53.31 50.75,53.16 51,53.46 51.25,53.45 51.5,52.12 51.75,49.83 52,49.16 52.25,49.41 52.5,49.66 52.75,49.91 53,50.16 53.25,50.41 53.5,50.66 53.75,50.91 54,51.16 54.25,51.41 54.5,51.66 54.75,51.91 55,52.16 55.25,52.41 55.5,52.66 55.75,52.91 56,53.16 56.25,53.15 56.5,53.23 56.75,53.53 57,53.1 57.25,51.64 57.5,51.16 57.75,51.45 58,51.75 58.25,52.04 58.5,52.33 58.75,52.62 59,52.91 59.25,53.2 59.5,53.2 59.75,53.35 60,53.27 60.25,53.23 60.5,53.56 60.75,53.24 61,53.23 61.25,53.35 61.5,53.36 61.75,52.94 62,50.65 62.25,49.06 62.5,49.29 62.75,49.52 63,49.75 63.25,49.98 63.5,50.21 63.75,50.44 64,50.67 64.25,50.9 64.5,51.13 64.75,51.36 65,51.59 65.25,51.81 65.5,52.04 65.75,52.27 66,52.5 66.25,52.73 66.5,52.96 66.75,53.16 67,53.42 67.25,53.36 67.5,53.6 67.75,53.37 68,53.53 68.25,53.44 68.5,53.6 68.75,53.18 69,53.14 69.25,53.15 69.5,53.41 69.75,53.1 70,53.42 70.25,53.46 70.5,53.55 70.75,52.03 71,50.15 71.25,50.17 71.5,50.36 71.75,50.55 72,50.73 72.25,50.92 72.5,51.11 72.75,51.3 73,51.49 73.25,51.67 73.5,51.86 73.75,52.05 74,52.23 74.25,52.42 74.5,52.61 74.75,52.8 75,52.98 75.25,53.17 75.5,52.4 75.75,51.01 76,51.26 76.25,51.51 76.5,51.76 76.75,52.01 77,52.26 77.25,52.51 77.5,52.76 77.75,53.01 78,53.26 78.25,53.12 78.5,53.35 78.75,53.17 79,53.45 79.25,51.57 79.5,50.05 79.75,50.37 80,50.69 80.25,51.02 80.5,51.34 80.75,51.66 81,51.98 81.25,52.3 81.5,52.62 81.75,52.94 82,53.13 82.25,53.28 82.5,53.37 82.75,53.58 83,53.48 83.25,53.28 83.5,53.22 83.75,51.76 84,51.14 84.25,51.43 84.5,51.72 84.75,52.02 85,52.31 85.25,52.6 85.5,52.89 85.75,53.18 86,53.12 86.25,53.45 86.5,53.35 86.75,53.13 87,50.83 87.25,49.05 87.5,49.3 87.75,49.55 88,49.8 88.25,50.05 88.5,50.3 88.75,50.55 89,50.8 89.25,51.05 89.5,51.3 89.75,51.55 90,51.8 90.25,52.05 90.5,52.3 90.75,52.55 91,52.8 91.25,53.05 91.5,53.23 91.75,53.13 92,53.51 92.25,53.23 92.5,52.28 92.75,51.04 93,51.33 93.25,51.62 93.5,51.91 93.75,52.2 94,52.49 94.25,52.79 94.5,53.08 94.75,53.37 95,53.5 95.25,53.15 95.5,53.39 95.75,53.22 96,53.58 96.25,53.14 96.5,53.23 96.75,53.43 97,53.12 97.25,51.66 97.5,49.37 97.75,49.19 98,49.42 98.25,49.65 98.5,49.88 98.75,50.11 99,50.34 99.25,50.57 99.5,50.8 99.75,51.03 100,51.26 100.25,51.48 100.5,51.71 100.75,51.94 101,52.17 101.25,52.4 101.5,52.63 101.75,52.86 102,53.09 102.25,53.32 102.5,53.55 102.75,53.25 103,53.48 103.25,53.29 103.5,53.23 103.75,53.27 104,53.18 104.25,53.32 104.5,53.23 104.75,53.48 105,53.52 105.25,53.31 105.5,53.4 105.75,53.35 106,52.85 106.25,50.98 106.5,50.09 106.75,50.28 107,50.47 107.25,50.65 107.5,50.84 107.75,51.03 108,51.22 108.25,51.4 108.5,51.59 108.75,51.78 109,51.97 109.25,52.15 109.5,52.34 109.75,52.53 110,52.72 110.25,52.9 110.5,53.09 110.75,53.04 111,51.58 111.25,51.15 111.5,51.4 111.75,51.65 112,51.9 112.25,52.15 112.5,52.4 112.75,52.65 113,52.9 113.25,53.15 113.5,53.24 113.75,53.6 114,53.39 114.25,53.4 114.5,52.4 114.75,50.52 115,50.23 115.25,50.55 115.5,50.87 115.75,51.2 116,51.52 116.25,51.84 116.5,52.16 116.75,52.48 117,52.8 117.25,53.12 117.5,53.14 117.75,53.15 118,53.19 118.25,53.21 118.5,53.4 118.75,53.19 119,52.4 119.25,51.01 119.5,51.3 119.75,51.6 120,51.89 120.25,52.18 120.5,52.47 120.75,52.76 121,53.05 121.25,53.35 121.5,53.39 121.75,53.38 122,53.59 122.25,51.84 122.5,49.55 122.75,49.19 123,49.44 123.25,49.69 123.5,49.94 123.75,50.19 124,50.44 124.25,50.69 124.5,50.94 124.75,51.19 125,51.44 125.25,51.69 125.5,51.94 125.75,52.19 126,52.44 126.25,52.69 126.5,52.94 126.75,53.19 127,53.22 127.25,53.15 127.5,53.19 127.75,52.93 128,51.47 128.25,51.2 128.5,51.49 128.75,51.78 129,52.07 129.25,52.36 129.5,52.66 129.75,52.95 130,53.16 130.25,53.31 130.5,53.55 130.75,53.29 131,53.2 131.25,53.1 131.5,53.42 131.75,53.38 132,53.23 132.25,53.19 132.5,52.67 132.75,50.37 133,49.09 133.25,49.32 133.5,49.55 133.75,49.78 134,50.01 134.25,50.24 134.5,50.47 134.75,50.7 135,50.93 135.25,51.15 135.5,51.38 135.75,51.61 136,51.84 136.25,52.07 136.5,52.3 136.75,52.53 137,52.76 137.25,52.99 137.5,53.22 137.75,53.13 138,53.48 138.25,53.58 138.5,53.4 138.75,53.57 139,53.59 139.25,53.13 139.5,53.5 139.75,53.35 140,53.19 140.25,53.45 140.5,53.58 140.75,53.21 141,53.6 141.25,53.23 141.5,51.8 141.75,50.01 142,50.2 142.25,50.38 142.5,50.57 142.75,50.76 143,50.95 143.25,51.13 143.5,51.32 143.75,51.51 144,51.7 144.25,51.88 144.5,52.07 144.75,52.26 145,52.45 145.25,52.63 145.5,52.82 145.75,53.01 146,53.2 146.25,52.22 146.5,51.04 146.75,51.29 147,51.54 147.25,51.79 147.5,52.04 147.75,52.29 148,52.54 148.25,52.79 148.5,53.04 148.75,53.25 149,53.54 149.25,53.42 149.5,53.19 149.75,53.23 150,51.35 150.25,50.09 150.5,50.41 150.75,50.73 151,51.05 151.25,51.38 151.5,51.7 151.75,52.02 152,52.34 152.25,52.66 152.5,52.98 152.75,53.3 153,53.12 153.25,53.17 153.5,53.58 153.75,53.38 154,53.43 154.25,53.04 154.5,51.58 154.75,51.18 155,51.47 155.25,51.76 155.5,52.05 155.75,52.34 156,52.63 156.25,52.93 156.5,53.22 156.75,53.46 157,53.25 157.25,53.55 157.5,52.85 157.75,50.56 158,49.08 158.25,49.33 158.5,49.58 158.75,49.83 159,50.08 159.25,50.33 159.5,50.58 159.75,50.83 160,51.08 160.25,51.33 160.5,51.58 160.75,51.83 161,52.08 161.25,52.33 161.5,52.58 161.75,52.83 162,53.08 162.25,53.33 162.5,53.25 162.75,53.52 163,53.48 163.25,52.11 163.5,51.07 163.75,51.36 164,51.65 164.25,51.95 164.5,52.24 164.75,52.53 165,52.82 165.25,53.11 165.5,53.4 165.75,53.4 166,53.25 166.25,53.28 166.5,53.53 166.75,53.4 167,53.15 167.25,53.31 167.5,53.39 167.75,53.24 168,51.38 168.25,49.09 168.5,49.22 168.75,49.45 169,49.68 169.25,49.91 169.5,50.14 169.75,50.37 170,50.6 170.25,50.82 170.5,51.05 170.75,51.28 171,51.51 171.25,51.74 171.5,51.97 171.75,52.2 172,52.43 172.25,52.66 172.5,52.89 172.75,53.12 173,53.35 173.25,53.49 173.5,53.4 173.75,53.54 174,53.42 174.25,53.46 174.5,53.59 174.75,53.39 175,53.42 175.25,53.49 175.5,53.13 175.75,53.49 176,53.4 176.25,53.54 176.5,53.2 176.75,52.62 177,50.75 177.25,50.11 177.5,50.3 177.75,50.49 178,50.68 178.25,50.86 178.5,51.05 178.75,51.24 179,51.43 179.25,51.61 179.5,51.8 179.75,51.99 180,52.18 180.25,52.36 180.5,52.55 180.75,52.74 181,52.93 181.25,53.11 181.5,52.87 181.75,51.41 182,51.18 182.25,51.43 182.5,51.68 182.75,51.93 183,52.18 183.25,52.43 183.5,52.68 183.75,52.93 184,53.18 184.25,53.43 184.5,53.33 184.75,53.38 185,53.32 185.25,52.17 185.5,50.3 185.75,50.27 186,50.59 186.25,50.91 186.5,51.23 186.75,51.56 187,51.88 187.25,52.2 187.5,52.52 187.75,52.84 188,53.16 188.25,53.26 188.5,53.43 188.75,53.34 189,53.15 189.25,53.24 189.5,53.43 189.75,52.23 190,51.05 190.25,51.34 190.5,51.63 190.75,51.92 191,52.21 191.25,52.5 191.5,52.8 191.75,53.09 192,53.38 192.25,53.45 192.5,53.28 192.75,53.58 193,51.57 193.25,49.27 193.5,49.22 193.75,49.47 194,49.72 194.25,49.97 194.5,50.22 194.75,50.47 195,50.72 195.25,50.97 195.5,51.22 195.75,51.47 196,51.72 196.25,51.97 196.5,52.22 196.75,52.47 197,52.72 197.25,52.97 197.5,53.22 197.75,53.47 198,53.58 198.25,53.19 198.5,52.75 198.75,51.29 199,51.23 199.25,51.52 199.5,51.82 199.75,52.11 200,52.4 200.25,52.69 200.5,52.98 200.75,53.27 201,53.54 201.25,53.24 201.5,53.23 201.75,53.57 202,53.24 202.25,53.24 202.5,53.29 202.75,53.37 203,53.47 203.25,52.39 203.5,50.1 203.75,49.12 204,49.35 204.25,49.58 204.5,49.81 204.75,50.04 205,50.27 205.25,50.49 205.5,50.72 205.75,50.95 206,51.18 206.25,51.41 206.5,51.64 206.75,51.87 207,52.1 207.25,52.33 207.5,52.56 207.75,52.79 208,53.02 208.25,53.24 208.5,53.3 208.75,53.2 209,53.6 209.25,53.39 209.5,53.19 209.75,53.58 210,53.19 210.25,53.31 210.5,53.17 210.75,53.26 211,53.43 211.25,53.32 211.5,53.5 211.75,53.13 212,53.3 212.25,51.57 212.5,50.03 212.75,50.22 213,50.41 213.25,50.59 213.5,50.78 213.75,50.97 214,51.16 214.25,51.34 214.5,51.53 214.75,51.72 215,51.91 215.25,52.09 215.5,52.28 215.75,52.47 216,52.66 216.25,52.84 216.5,53.03 216.75,53.22 217,52.05 217.25,51.07 217.5,51.32 217.75,51.57 218,51.82 218.25,52.07 218.5,52.32 218.75,52.57 219,52.82 219.25,53.07 219.5,53.15 219.75,53.3 220,53.54 220.25,53.47 220.5,53 220.75,51.13 221,50.13 221.25,50.45 221.5,50.77 221.75,51.09 222,51.41 222.25,51.74 222.5,52.06 222.75,52.38 223,52.7 223.25,53.02 223.5,53.26 223.75,53.3 224,53.55 224.25,53.47 224.5,53.36 224.75,53.48 225,52.87 225.25,51.41 225.5,51.21 225.75,51.5 226,51.79 226.25,52.09 226.5,52.38 226.75,52.67 227,52.96 227.25,53.19 227.5,53.29 227.75,53.49 228,53.24 228.25,52.57 228.5,50.28 228.75,49.11 229,49.36 229.25,49.61 229.5,49.86 229.75,50.11 230,50.36 230.25,50.61 230.5,50.86 230.75,51.11 231,51.36 231.25,51.61 231.5,51.86 231.75,52.11 232,52.36 232.25,52.61 232.5,52.86 232.75,53.11 233,53.18 233.25,53.51 233.5,53.14 233.75,53.31 234,51.93 234.25,51.11 234.5,51.4 234.75,51.69 235,51.98 235.25,52.27 235.5,52.56 235.75,52.86 236,53.15 236.25,53.24 236.5,53.19 236.75,53.18 237,53.35 237.25,53.14 237.5,53.16 237.75,53.51 238,53.42 238.25,53.41 238.5,53.4 238.75,51.11 239,49.02 239.25,49.25 239.5,49.48 239.75,49.71 240,49.94 240.25,50.16 240.5,50.39 240.75,50.62 241,50.85 241.25,51.08 241.5,51.31 241.75,51.54 242,51.77 242.25,52 242.5,52.23 242.75,52.46 243,52.69 243.25,52.91 243.5,53.14 243.75,53.37 244,53.4 244.25,53.3 244.5,53.53 244.75,53.23 245,53.19 245.25,53.41 245.5,53.18 245.75,53.4 246,53.21 246.25,53.48 246.5,53.38 246.75,53.2 247,53.19 247.25,53.57 247.5,52.4 247.75,50.52 248,50.14 248.25,50.32 248.5,50.51 248.75,50.7 249,50.89 249.25,51.07 249.5,51.26 249.75,51.45 250,51.64 250.25,51.82 250.5,52.01 250.75,52.2 251,52.39 251.25,52.57 251.5,52.76 251.75,52.95 252,53.12 252.25,52.69 252.5,51.23 252.75,51.21 253,51.46 253.25,51.71 253.5,51.96 253.75,52.21 254,52.46 254.25,52.71 254.5,52.96 254.75,53.21 255,53.44 255.25,53.49 255.5,53.41 255.75,53.59 256,51.95 256.25,50.07 256.5,50.31 256.75,50.63 257,50.95 257.25,51.27 257.5,51.59 257.75,51.92 258,52.24 258.25,52.56 258.5,52.88 258.75,53.2 259,53.29 259.25,53.19 259.5,53.23 259.75,53.22 260,53.21 260.25,53.14 260.5,52.05 260.75,51.08 261,51.37 261.25,51.66 261.5,51.96 261.75,52.25 262,52.54 262.25,52.83 262.5,53.12 262.75,53.41 263,53.21 263.25,53.35 263.5,53.51 263.75,51.29 264,49 264.25,49.25 264.5,49.5 264.75,49.75 265,50 265.25,50.25 265.5,50.5 265.75,50.75 266,51 266.25,51.25 266.5,51.5 266.75,51.75 267,52 267.25,52.25 267.5,52.5 267.75,52.75 268,53 268.25,53.12 268.5,53.38 268.75,53.1 269,53.33 269.25,52.58 269.5,51.12 269.75,51.27 270,51.56 270.25,51.85 270.5,52.14 270.75,52.43 271,52.73 271.25,53.02 271.5,53.28 271.75,53.42 272,53.28 272.25,53.39 272.5,53.45 272.75,53.6 273,53.18 273.25,53.27 273.5,53.35 273.75,53.47 274,52.12 274.25,49.83 274.5,49.15 274.75,49.38 275,49.6 275.25,49.83 275.5,50.06 275.75,50.29 276,50.52 276.25,50.75 276.5,50.98 276.75,51.21 277,51.31 277.25,49.98 277.5,48.66 277.75,47.33 278,46 278.25,46.76 278.5,47.52 278.75,48.28 279,49.04 279.25,49.79 279.5,50.55 279.75,51.31 280,52.07 280.25,52.83 280.5,53.36 280.75,53.48 281,53.42 281.25,53.11 281.5,53.32 281.75,53.33 282,53.4 282,55.43 281.75,55.59 281.5,55.46 281.25,55.55 281,55.49 280.75,55.49 280.5,55.8 280.25,56.09 280,56.81 279.75,57.53 279.5,58.25 279.25,58.97 279,59.69 278.75,60.41 278.5,61.13 278.25,61.85 278,62.58 277.75,61.31 277.5,60.05 277.25,58.79 277,57.53 276.75,57.63 276.5,57.84 276.25,58.06 276,58.28 275.75,58.5 275.5,58.71 275.25,58.93 275,59.15 274.75,59.37 274.5,59.59 274.25,58.94 274,56.76 273.75,55.72 273.5,55.68 273.25,55.5 273,55.69 272.75,55.55 272.5,55.75 272.25,55.79 272,55.42 271.75,55.9 271.5,55.7 271.25,55.91 271,56.18 270.75,56.46 270.5,56.74 270.25,57.02 270,57.29 269.75,57.57 269.5,57.71 269.25,56.33 269,55.81 268.75,55.57 268.5,55.71 268.25,55.69 268,55.92 267.75,56.16 267.5,56.4 267.25,56.64 267,56.88 266.75,57.11 266.5,57.35 266.25,57.59 266,57.83 265.75,58.06 265.5,58.3 265.25,58.54 265,58.77 264.75,59.01 264.5,59.25 264.25,59.49 264,59.73 263.75,57.55 263.5,55.55 263.25,55.62 263,55.82 262.75,55.56 262.5,55.81 262.25,56.08 262,56.36 261.75,56.64 261.5,56.92 261.25,57.19 261,57.47 260.75,57.75 260.5,56.83 260.25,55.46 260,55.75 259.75,55.64 259.5,55.77 259.25,55.66 259,55.82 258.75,55.74 258.5,56.04 258.25,56.34 258,56.65 257.75,56.96 257.5,57.26 257.25,57.57 257,57.87 256.75,58.18 256.5,58.48 256.25,58.7 256,56.92 255.75,55.58 255.5,55.69 255.25,55.66 255,55.52 254.75,55.73 254.5,55.96 254.25,56.2 254,56.44 253.75,56.68 253.5,56.91 253.25,57.15 253,57.39 252.75,57.63 252.5,57.6 252.25,56.22 252,55.8 251.75,55.97 251.5,56.15 251.25,56.33 251,56.51 250.75,56.69 250.5,56.87 250.25,57.04 250,57.22 249.75,57.4 249.5,57.58 249.25,57.76 249,57.93 248.75,58.11 248.5,58.29 248.25,58.47 248,58.65 247.75,58.28 247.5,56.5 247.25,55.66 247,55.82 246.75,55.86 246.5,55.89 246.25,55.57 246,55.57 245.75,55.87 245.5,55.66 245.25,55.61 245,55.87 244.75,55.48 244.5,55.69 244.25,55.83 244,55.47 243.75,55.57 243.5,55.79 243.25,56.01 243,56.22 242.75,56.44 242.5,56.66 242.25,56.88 242,57.1 241.75,57.31 241.5,57.53 241.25,57.75 241,57.97 240.75,58.18 240.5,58.4 240.25,58.62 240,58.84 239.75,59.05 239.5,59.27 239.25,59.49 239,59.71 238.75,57.72 238.5,55.66 238.25,55.7 238,55.48 237.75,55.82 237.5,55.53 237.25,55.64 237,55.41 236.75,55.83 236.5,55.57 236.25,55.51 236,55.79 235.75,56.06 235.5,56.34 235.25,56.62 235,56.89 234.75,57.17 234.5,57.45 234.25,57.73 234,56.94 233.75,55.55 233.5,55.51 233.25,55.62 233,55.66 232.75,55.82 232.5,56.06 232.25,56.3 232,56.53 231.75,56.77 231.5,57.01 231.25,57.25 231,57.48 230.75,57.72 230.5,57.96 230.25,58.2 230,58.43 229.75,58.67 229.5,58.91 229.25,59.15 229,59.38 228.75,59.62 228.5,58.51 228.25,56.33 228,55.68 227.75,55.43 227.5,55.47 227.25,55.69 227,55.96 226.75,56.24 226.5,56.52 226.25,56.79 226,57.07 225.75,57.35 225.5,57.63 225.25,57.44 225,56.05 224.75,55.47 224.5,55.48 224.25,55.46 224,55.56 223.75,55.78 223.5,55.6 223.25,55.9 223,56.21 222.75,56.52 222.5,56.82 222.25,57.13 222,57.43 221.75,57.74 221.5,58.04 221.25,58.35 221,58.65 220.75,57.71 220.5,55.92 220.25,55.68 220,55.88 219.75,55.6 219.5,55.62 219.25,55.87 219,56.1 218.75,56.33 218.5,56.57 218.25,56.81 218,57.05 217.75,57.28 217.5,57.52 217.25,57.76 217,56.83 216.75,55.9 216.5,55.9 216.25,56.07 216,56.25 215.75,56.43 215.5,56.61 215.25,56.79 215,56.97 214.75,57.14 214.5,57.32 214.25,57.5 214,57.68 213.75,57.86 213.5,58.03 213.25,58.21 213,58.39 212.75,58.57 212.5,58.75 212.25,57.28 212,55.74 211.75,55.52 211.5,55.78 211.25,55.8 211,55.44 210.75,55.86 210.5,55.8 210.25,55.54 210,55.83 209.75,55.82 209.5,55.84 209.25,55.69 209,55.53 208.75,55.54 208.5,55.85 208.25,55.74 208,55.91 207.75,56.13 207.5,56.35 207.25,56.56 207,56.78 206.75,57 206.5,57.22 206.25,57.43 206,57.65 205.75,57.87 205.5,58.09 205.25,58.31 205,58.52 204.75,58.74 204.5,58.96 204.25,59.18 204,59.39 203.75,59.61 203.5,58.68 203.25,56.5 203,55.88 202.75,55.87 202.5,55.75 202.25,55.44 202,55.83 201.75,55.79 201.5,55.49 201.25,55.52 201,55.41 200.75,55.83 200.5,55.94 200.25,56.22 200,56.5 199.75,56.77 199.5,57.05 199.25,57.33 199,57.6 198.75,57.55 198.5,56.16 198.25,55.69 198,55.46 197.75,55.68 197.5,55.87 197.25,55.95 197,56.19 196.75,56.43 196.5,56.67 196.25,56.9 196,57.14 195.75,57.38 195.5,57.62 195.25,57.85 195,58.09 194.75,58.33 194.5,58.57 194.25,58.8 194,59.04 193.75,59.28 193.5,59.52 193.25,59.46 193,57.29 192.75,55.76 192.5,55.79 192.25,55.69 192,55.56 191.75,55.84 191.5,56.12 191.25,56.4 191,56.67 190.75,56.95 190.5,57.23 190.25,57.5 190,57.78 189.75,56.66 189.5,55.83 189.25,55.71 189,55.42 188.75,55.64 188.5,55.89 188.25,55.87 188,55.77 187.75,56.08 187.5,56.38 187.25,56.69 187,56.99 186.75,57.3 186.5,57.6 186.25,57.91 186,58.21 185.75,58.52 185.5,58.49 185.25,56.71 185,55.53 184.75,55.84 184.5,55.77 184.25,55.75 184,55.82 183.75,55.99 183.5,56.23 183.25,56.47 183,56.7 182.75,56.94 182.5,57.18 182.25,57.42 182,57.65 181.75,57.44 181.5,56.05 181.25,55.82 181,56 180.75,56.17 180.5,56.35 180.25,56.53 180,56.71 179.75,56.89 179.5,57.06 179.25,57.24 179,57.42 178.75,57.6 178.5,57.78 178.25,57.96 178,58.13 177.75,58.31 177.5,58.49 177.25,58.67 177,58.06 176.75,56.28 176.5,55.72 176.25,55.79 176,55.51 175.75,55.8 175.5,55.66 175.25,55.77 175,55.53 174.75,55.75 174.5,55.61 174.25,55.6 174,55.43 173.75,55.89 173.5,55.78 173.25,55.74 173,55.87 172.75,55.81 172.5,56.03 172.25,56.25 172,56.47 171.75,56.69 171.5,56.9 171.25,57.12 171,57.34 170.75,57.56 170.5,57.77 170.25,57.99 170,58.21 169.75,58.43 169.5,58.65 169.25,58.86 169,59.08 168.75,59.3 168.5,59.52 168.25,59.64 168,57.46 167.75,55.84 167.5,55.51 167.25,55.77 167,55.62 166.75,55.77 166.5,55.7 166.25,55.63 166,55.65 165.75,55.8 165.5,55.54 165.25,55.82 165,56.1 164.75,56.37 164.5,56.65 164.25,56.93 164,57.2 163.75,57.48 163.5,57.76 163.25,56.77 163,55.56 162.75,55.48 162.5,55.82 162.25,55.61 162,55.85 161.75,56.09 161.5,56.32 161.25,56.56 161,56.8 160.75,57.04 160.5,57.27 160.25,57.51 160,57.75 159.75,57.99 159.5,58.22 159.25,58.46 159,58.7 158.75,58.94 158.5,59.17 158.25,59.41 158,59.65 157.75,58.24 157.5,56.07 157.25,55.72 157,55.65 156.75,55.51 156.5,55.87 156.25,56 156,56.27 155.75,56.55 155.5,56.83 155.25,57.1 155,57.38 154.75,57.66 154.5,57.27 154.25,55.89 154,55.75 153.75,55.79 153.5,55.61 153.25,55.71 153,55.65 152.75,55.64 152.5,55.94 152.25,56.25 152,56.55 151.75,56.86 151.5,57.16 151.25,57.47 151,57.77 150.75,58.08 150.5,58.38 150.25,58.69 150,57.49 149.75,55.83 149.5,55.85 149.25,55.81 149,55.7 148.75,55.77 148.5,55.89 148.25,56.12 148,56.36 147.75,56.6 147.5,56.84 147.25,57.07 147,57.31 146.75,57.55 146.5,57.79 146.25,56.66 146,55.82 145.75,55.92 145.5,56.1 145.25,56.27 145,56.45 144.75,56.63 144.5,56.81 144.25,56.99 144,57.16 143.75,57.34 143.5,57.52 143.25,57.7 143,57.88 142.75,58.06 142.5,58.23 142.25,58.41 142,58.59 141.75,58.77 141.5,57.07 141.25,55.63 141,55.82 140.75,55.76 140.5,55.84 140.25,55.55 140,55.49 139.75,55.72 139.5,55.7 139.25,55.47 139,55.68 138.75,55.79 138.5,55.52 138.25,55.67 138,55.85 137.75,55.77 137.5,55.72 137.25,55.94 137,56.15 136.75,56.37 136.5,56.59 136.25,56.81 136,57.03 135.75,57.24 135.5,57.46 135.25,57.68 135,57.9 134.75,58.11 134.5,58.33 134.25,58.55 134,58.77 133.75,58.98 133.5,59.2 133.25,59.42 133,59.64 132.75,58.42 132.5,56.24 132.25,55.53 132,55.42 131.75,55.49 131.5,55.78 131.25,55.69 131,55.53 130.75,55.6 130.5,55.9 130.25,55.84 130,55.7 129.75,55.97 129.5,56.25 129.25,56.53 129,56.81 128.75,57.08 128.5,57.36 128.25,57.64 128,57.38 127.75,56 127.5,55.47 127.25,55.54 127,55.51 126.75,55.74 126.5,55.98 126.25,56.22 126,56.46 125.75,56.69 125.5,56.93 125.25,57.17 125,57.41 124.75,57.64 124.5,57.88 124.25,58.12 124,58.36 123.75,58.59 123.5,58.83 123.25,59.07 123,59.31 122.75,59.54 122.5,59.2 122.25,57.03 122,55.71 121.75,55.62 121.5,55.73 121.25,55.69 121,55.87 120.75,56.15 120.5,56.43 120.25,56.71 120,56.98 119.75,57.26 119.5,57.54 119.25,57.81 119,56.49 118.75,55.49 118.5,55.82 118.25,55.51 118,55.48 117.75,55.71 117.5,55.59 117.25,55.81 117,56.11 116.75,56.42 116.5,56.72 116.25,57.03 116,57.33 115.75,57.64 115.5,57.94 115.25,58.25 115,58.56 114.75,58.28 114.5,56.5 114.25,55.84 114,55.81 113.75,55.85 113.5,55.54 113.25,55.78 113,56.02 112.75,56.26 112.5,56.49 112.25,56.73 112,56.97 111.75,57.21 111.5,57.44 111.25,57.68 111,57.27 110.75,55.89 110.5,55.84 110.25,56.02 110,56.2 109.75,56.37 109.5,56.55 109.25,56.73 109,56.91 108.75,57.09 108.5,57.26 108.25,57.44 108,57.62 107.75,57.8 107.5,57.98 107.25,58.16 107,58.33 106.75,58.51 106.5,58.69 106.25,57.85 106,56.07 105.75,55.52 105.5,55.9 105.25,55.56 105,55.84 104.75,55.52 104.5,55.5 104.25,55.59 104,55.55 103.75,55.46 103.5,55.82 103.25,55.74 103,55.61 102.75,55.62 102.5,55.65 102.25,55.62 102,55.89 101.75,56.06 101.5,56.28 101.25,56.49 101,56.71 100.75,56.93 100.5,57.15 100.25,57.37 100,57.58 99.75,57.8 99.5,58.02 99.25,58.24 99,58.45 98.75,58.67 98.5,58.89 98.25,59.11 98,59.32 97.75,59.54 97.5,59.38 97.25,57.2 97,55.71 96.75,55.54 96.5,55.85 96.25,55.53 96,55.43 95.75,55.42 95.5,55.81 95.25,55.42 95,55.58 94.75,55.86 94.5,55.85 94.25,56.13 94,56.41 93.75,56.68 93.5,56.96 93.25,57.24 93,57.51 92.75,57.79 92.5,56.61 92.25,55.42 92,55.87 91.75,55.56 91.5,55.9 91.25,55.88 91,56.12 90.75,56.35 90.5,56.59 90.25,56.83 90,57.07 89.75,57.3 89.5,57.54 89.25,57.78 89,58.02 88.75,58.25 88.5,58.49 88.25,58.73 88,58.97 87.75,59.2 87.5,59.44 87.25,59.68 87,57.98 86.75,55.81 86.5,55.74 86.25,55.41 86,55.75 85.75,55.75 85.5,56.03 85.25,56.31 85,56.58 84.75,56.86 84.5,57.14 84.25,57.41 84,57.69 83.75,57.1 83.5,55.72 83.25,55.55 83,55.86 82.75,55.79 82.5,55.68 82.25,55.78 82,55.76 81.75,55.98 81.5,56.28 81.25,56.59 81,56.89 80.75,57.2 80.5,57.5 80.25,57.81 80,58.12 79.75,58.42 79.5,58.73 79.25,57.28 79,55.52 78.75,55.51 78.5,55.71 78.25,55.46 78,55.68 77.75,55.92 77.5,56.15 77.25,56.39 77,56.63 76.75,56.87 76.5,57.1 76.25,57.34 76,57.58 75.75,57.82 75.5,56.49 75.25,55.85 75,55.94 74.75,56.12 74.5,56.3 74.25,56.47 74,56.65 73.75,56.83 73.5,57.01 73.25,57.19 73,57.36 72.75,57.54 72.5,57.72 72.25,57.9 72,58.08 71.75,58.25 71.5,58.43 71.25,58.61 71,58.63 70.75,56.85 70.5,55.82 70.25,55.42 70,55.61 69.75,55.69 69.5,55.6 69.25,55.54 69,55.76 68.75,55.46 68.5,55.78 68.25,55.82 68,55.57 67.75,55.55 67.5,55.65 67.25,55.41 67,55.85 66.75,55.75 66.5,55.96 66.25,56.18 66,56.4 65.75,56.62 65.5,56.83 65.25,57.05 65,57.27 64.75,57.49 64.5,57.7 64.25,57.92 64,58.14 63.75,58.36 63.5,58.58 63.25,58.79 63,59.01 62.75,59.23 62.5,59.45 62.25,59.66 62,58.16 61.75,55.98 61.5,55.74 61.25,55.59 61,55.89 60.75,55.5 60.5,55.53 60.25,55.53 60,55.43 59.75,55.67 59.5,55.77 59.25,55.73 59,56.01 58.75,56.28 58.5,56.56 58.25,56.84 58,57.12 57.75,57.39 57.5,57.67 57.25,57.22 57,55.83 56.75,55.66 56.5,55.81 56.25,55.71 56,55.82 55.75,56.01 55.5,56.25 55.25,56.49 55,56.72 54.75,56.96 54.5,57.2 54.25,57.44 54,57.67 53.75,57.91 53.5,58.15 53.25,58.39 53,58.62 52.75,58.86 52.5,59.1 52.25,59.34 52,59.57 51.75,58.94 51.5,56.76 51.25,55.63 51,55.52 50.75,55.74 50.5,55.82 50.25,55.91 50,56.18 49.75,56.46 49.5,56.74 49.25,57.02 49,57.29 48.75,57.57 48.5,57.71 48.25,56.33 48,55.62 47.75,55.45 47.5,55.64 47.25,55.68 47,55.41 46.75,55.54 46.5,55.84 46.25,56.15 46,56.45 45.75,56.76 45.5,57.07 45.25,57.37 45,57.68 44.75,57.98 44.5,58.29 44.25,58.59 44,58.06 43.75,56.28 43.5,55.87 43.25,55.61 43,55.43 42.75,55.75 42.5,55.86 42.25,56.05 42,56.29 41.75,56.52 41.5,56.76 41.25,57 41,57.24 40.75,57.47 40.5,57.71 40.25,57.1 40,55.72 39.75,55.86 39.5,56.04 39.25,56.22 39,56.4 38.75,56.57 38.5,56.75 38.25,56.93 38,57.11 37.75,57.29 37.5,57.46 37.25,57.64 37,57.82 36.75,58 36.5,58.18 36.25,58.35 36,58.53 35.75,58.71 35.5,57.63 35.25,55.87 35,55.67 34.75,55.75 34.5,55.65 34.25,55.62 34,55.78 33.75,55.65 33.5,55.54 33.25,55.68 33,55.79 32.75,55.66 32.5,55.68 32.25,55.64 32,55.8 31.75,55.49 31.5,55.65 31.25,55.87 31,56.08 30.75,56.3 30.5,56.52 30.25,56.74 30,56.96 29.75,57.17 29.5,57.39 29.25,57.61 29,57.83 28.75,58.04 28.5,58.26 28.25,58.48 28,58.7 27.75,58.92 27.5,59.13 27.25,59.35 27,59.57 26.75,59.12 26.5,56.94 26.25,55.6 26,55.8 25.75,55.79 25.5,55.64 25.25,55.79 25,55.73 24.75,55.8 24.5,55.64 24.25,55.85 24,55.61 23.75,55.89 23.5,56.16 23.25,56.44 23,56.72 22.75,56.99 22.5,57.27 22.25,57.55 22,57.82 21.75,56.44 21.5,55.8 21.25,55.89 21,55.51 20.75,55.79 20.5,55.91 20.25,56.14 20,56.38 19.75,56.62 19.5,56.86 19.25,57.09 19,57.33 18.75,57.57 18.5,57.81 18.25,58.04 18,58.28 17.75,58.52 17.5,58.76 17.25,58.99 17,59.23 16.75,59.47 16.5,59.71 16.25,57.72 16,55.54 15.75,55.48 15.5,55.43 15.25,55.72 15,55.79 14.75,56.06 14.5,56.34 14.25,56.62 14,56.89 13.75,57.17 13.5,57.45 13.25,57.73 13,56.94 12.75,55.64 12.5,55.52 12.25,55.48 12,55.84 11.75,55.61 11.5,55.83 11.25,55.84 11,56.01 10.75,56.32 10.5,56.63 10.25,56.93 10,57.24 9.75,57.54 9.5,57.85 9.25,58.15 9,58.46 8.75,58.76 8.5,57.06 8.25,55.87 8,55.63 7.75,55.7 7.5,55.56 7.25,55.71 7,55.94 6.75,56.18 6.5,56.42 6.25,56.66 6,56.89 5.75,57.13 5.5,57.37 5.25,57.61 5,57.71 4.75,57.63 4.5,58.04 4.25,58.44 4,58.84 3.75,59.24 3.5,59.64 3.25,60.05 3,60.45 2.75,60.85 2.5,61.25 2.25,61.65 2,62.06 1.75,62.46 1.5,62.86 1.25,63.26 1,63.66 0.75,64.07 0.5,64.47 0.25,64.87 0,57.98Z" fill="#f3ebc6"/><path d="M6.24,54.5L6.99,46.53L7.44,34.58L7.74,27.95L8.09,34.58L8.54,46.53L9.84,54.5L9.19,58.1L8.71,63.5L8.39,66.5L8.07,63.5L7.64,58.1ZM10.66,54.5L11.41,50.23L11.86,43.82L12.16,40.27L12.51,43.82L12.96,50.23L14.26,54.5L13.61,63.87L13.13,77.93L12.81,85.73L12.49,77.93L12.06,63.87ZM19.5,54.5L20.25,50.19L20.7,43.74L21,40.15L21.35,43.74L21.8,50.19L23.1,54.5L22.45,63.91L21.97,78.01L21.65,85.85L21.33,78.01L20.9,63.91ZM23.92,54.5L24.67,46.64L25.12,34.84L25.42,28.29L25.77,34.84L26.22,46.64L27.52,54.5L26.87,58.1L26.39,63.5L26.07,66.5L25.75,63.5L25.32,58.1ZM32.76,54.5L33.51,49.55L33.96,42.13L34.26,38.01L34.61,42.13L35.06,49.55L36.36,54.5L35.71,64.85L35.23,80.37L34.91,88.99L34.59,80.37L34.16,64.85ZM41.6,54.5L42.35,46.71L42.8,35.02L43.1,28.53L43.45,35.02L43.9,46.71L45.2,54.5L44.55,58.1L44.07,63.5L43.75,66.5L43.43,63.5L43,58.1ZM46.02,54.5L46.77,49.81L47.22,42.79L47.52,38.88L47.87,42.79L48.32,49.81L49.62,54.5L48.97,64.29L48.49,78.96L48.17,87.12L47.85,78.96L47.42,64.29ZM54.86,54.5L55.61,50.21L56.06,43.77L56.36,40.19L56.71,43.77L57.16,50.21L58.46,54.5L57.81,63.89L57.33,77.98L57.01,85.81L56.69,77.98L56.26,63.89ZM59.28,54.5L60.03,46.1L60.48,33.5L60.78,26.49L61.13,33.5L61.58,46.1L62.88,54.5L62.23,58.1L61.75,63.5L61.43,66.5L61.11,63.5L60.68,58.1ZM63.7,54.5L64.45,51.23L64.9,46.34L65.2,43.62L65.55,46.34L66,51.23L67.3,54.5L66.65,59.87L66.17,67.91L65.85,72.38L65.53,67.91L65.1,59.87ZM68.12,54.5L68.87,49.75L69.32,42.63L69.62,38.67L69.97,42.63L70.42,49.75L71.72,54.5L71.07,64.65L70.59,79.87L70.27,88.33L69.95,79.87L69.52,64.65ZM76.96,54.5L77.71,46.13L78.16,33.56L78.46,26.59L78.81,33.56L79.26,46.13L80.56,54.5L79.91,58.1L79.43,63.5L79.11,66.5L78.79,63.5L78.36,58.1ZM81.38,54.5L82.13,50.31L82.58,44.02L82.88,40.52L83.23,44.02L83.68,50.31L84.98,54.5L84.33,63.79L83.85,77.73L83.53,85.48L83.21,77.73L82.78,63.79ZM90.22,54.5L90.97,49.8L91.42,42.75L91.72,38.83L92.07,42.75L92.52,49.8L93.82,54.5L93.17,64.3L92.69,79L92.37,87.17L92.05,79L91.62,64.3ZM94.64,54.5L95.39,46.51L95.84,34.53L96.14,27.87L96.49,34.53L96.94,46.51L98.24,54.5L97.59,58.1L97.11,63.5L96.79,66.5L96.47,63.5L96.04,58.1ZM99.06,54.5L99.81,50.49L100.26,44.47L100.56,41.12L100.91,44.47L101.36,50.49L102.66,54.5L102.01,60.61L101.53,69.78L101.21,74.88L100.89,69.78L100.46,60.61ZM103.48,54.5L104.23,49.96L104.68,43.16L104.98,39.38L105.33,43.16L105.78,49.96L107.08,54.5L106.43,64.44L105.95,79.34L105.63,87.62L105.31,79.34L104.88,64.44ZM112.32,54.5L113.07,46.4L113.52,34.24L113.82,27.49L114.17,34.24L114.62,46.4L115.92,54.5L115.27,58.1L114.79,63.5L114.47,66.5L114.15,63.5L113.72,58.1ZM116.74,54.5L117.49,50.25L117.94,43.86L118.24,40.32L118.59,43.86L119.04,50.25L120.34,54.5L119.69,63.85L119.21,77.89L118.89,85.68L118.57,77.89L118.14,63.85ZM125.58,54.5L126.33,50.33L126.78,44.08L127.08,40.61L127.43,44.08L127.88,50.33L129.18,54.5L128.53,63.77L128.05,77.67L127.73,85.39L127.41,77.67L126.98,63.77ZM130,54.5L130.75,46.21L131.2,33.79L131.5,26.88L131.85,33.79L132.3,46.21L133.6,54.5L132.95,58.1L132.47,63.5L132.15,66.5L131.83,63.5L131.4,58.1ZM134.42,54.5L135.17,51.12L135.62,46.04L135.92,43.22L136.27,46.04L136.72,51.12L138.02,54.5L137.37,59.98L136.89,68.21L136.57,72.78L136.25,68.21L135.82,59.98ZM138.84,54.5L139.59,49.34L140.04,41.6L140.34,37.3L140.69,41.6L141.14,49.34L142.44,54.5L141.79,65.06L141.31,80.9L140.99,89.7L140.67,80.9L140.24,65.06ZM147.68,54.5L148.43,46.52L148.88,34.55L149.18,27.9L149.53,34.55L149.98,46.52L151.28,54.5L150.63,58.1L150.15,63.5L149.83,66.5L149.51,63.5L149.08,58.1ZM152.1,54.5L152.85,50.23L153.3,43.82L153.6,40.26L153.95,43.82L154.4,50.23L155.7,54.5L155.05,63.87L154.57,77.93L154.25,85.74L153.93,77.93L153.5,63.87ZM160.94,54.5L161.69,50.26L162.14,43.9L162.44,40.36L162.79,43.9L163.24,50.26L164.54,54.5L163.89,63.84L163.41,77.85L163.09,85.64L162.77,77.85L162.34,63.84ZM165.36,54.5L166.11,46.06L166.56,33.41L166.86,26.38L167.21,33.41L167.66,46.06L168.96,54.5L168.31,58.1L167.83,63.5L167.51,66.5L167.19,63.5L166.76,58.1ZM174.2,54.5L174.95,49.69L175.4,42.47L175.7,38.46L176.05,42.47L176.5,49.69L177.8,54.5L177.15,64.71L176.67,80.03L176.35,88.54L176.03,80.03L175.6,64.71ZM183.04,54.5L183.79,46.61L184.24,34.77L184.54,28.19L184.89,34.77L185.34,46.61L186.64,54.5L185.99,58.1L185.51,63.5L185.19,66.5L184.87,63.5L184.44,58.1ZM187.46,54.5L188.21,49.76L188.66,42.64L188.96,38.68L189.31,42.64L189.76,49.76L191.06,54.5L190.41,64.34L189.93,79.11L189.61,87.32L189.29,79.11L188.86,64.34ZM196.3,54.5L197.05,49.86L197.5,42.9L197.8,39.03L198.15,42.9L198.6,49.86L199.9,54.5L199.25,64.24L198.77,78.85L198.45,86.97L198.13,78.85L197.7,64.24ZM200.72,54.5L201.47,46.34L201.92,34.1L202.22,27.3L202.57,34.1L203.02,46.34L204.32,54.5L203.67,58.1L203.19,63.5L202.87,66.5L202.55,63.5L202.12,58.1ZM209.56,54.5L210.31,49.8L210.76,42.75L211.06,38.83L211.41,42.75L211.86,49.8L213.16,54.5L212.51,64.6L212.03,79.75L211.71,88.17L211.39,79.75L210.96,64.6ZM218.4,54.5L219.15,46.69L219.6,34.98L219.9,28.47L220.25,34.98L220.7,46.69L222,54.5L221.35,58.1L220.87,63.5L220.55,66.5L220.23,63.5L219.8,58.1ZM222.82,54.5L223.57,49.68L224.02,42.46L224.32,38.45L224.67,42.46L225.12,49.68L226.42,54.5L225.77,64.42L225.29,79.29L224.97,87.55L224.65,79.29L224.22,64.42ZM231.66,54.5L232.41,49.85L232.86,42.88L233.16,39.01L233.51,42.88L233.96,49.85L235.26,54.5L234.61,64.25L234.13,78.87L233.81,86.99L233.49,78.87L233.06,64.25ZM236.08,54.5L236.83,46.75L237.28,35.13L237.58,28.67L237.93,35.13L238.38,46.75L239.68,54.5L239.03,58.1L238.55,63.5L238.23,66.5L237.91,63.5L237.48,58.1ZM244.92,54.5L245.67,49.82L246.12,42.81L246.42,38.92L246.77,42.81L247.22,49.82L248.52,54.5L247.87,64.58L247.39,79.69L247.07,88.08L246.75,79.69L246.32,64.58ZM253.76,54.5L254.51,46.58L254.96,34.71L255.26,28.11L255.61,34.71L256.06,46.58L257.36,54.5L256.71,58.1L256.23,63.5L255.91,66.5L255.59,63.5L255.16,58.1ZM258.18,54.5L258.93,50.39L259.38,44.23L259.68,40.8L260.03,44.23L260.48,50.39L261.78,54.5L261.13,63.71L260.65,77.52L260.33,85.2L260.01,77.52L259.58,63.71ZM267.02,54.5L267.77,50.25L268.22,43.87L268.52,40.32L268.87,43.87L269.32,50.25L270.62,54.5L269.97,63.85L269.49,77.88L269.17,85.68L268.85,77.88L268.42,63.85ZM271.44,54.5L272.19,46.74L272.64,35.09L272.94,28.62L273.29,35.09L273.74,46.74L275.04,54.5L274.39,58.1L273.91,63.5L273.59,66.5L273.27,63.5L272.84,58.1ZM269.3,54.5L270.05,50.3L270.5,44L270.8,40.5L271.15,44L271.6,50.3L272.9,54.5L272.25,61.1L271.77,71L271.45,76.5L271.13,71L270.7,61.1ZM273,54.5L273.75,49.1L274.2,41L274.5,36.5L274.85,41L275.3,49.1L276.6,54.5L275.95,57.5L275.47,62L275.15,64.5L274.83,62L274.4,57.5Z" fill="#f3ebc6"/></svg><div class="abs" style="left:4px;top:2px;font-size:8.300px;line-height:10px;color:#fdfbf0">Drummer</div></div>
<div class="abs" style="left:247px;top:15px;width:1px;height:371px;background:#c2c2c2"></div><div class="abs" style="left:246px;top:23px;width:1px;height:363px;background:#1e1e1e"></div>
<svg class="abs" style="left:242px;top:14px" width="11" height="10" viewBox="0 0 11 10"><path d="M1 1.500q0-1 1-1h7q1 0 1 1V5L5.500 9.500 1 5z" fill="#c9c9c9" stroke="#8a8a8a" stroke-width=".6"/></svg>
<div class="abs" style="left:979px;top:5.500px;width:49px;height:16px;border-radius:3px;background:#3d3d3d;border:1px solid #464646"></div><div class="abs" style="left:984px;top:13px;width:40px;height:2px;background:#222"></div><svg class="abs" style="left:984px;top:8px" width="10" height="9" viewBox="0 0 10 9"><path d="M5 .5L8.500 4v4h-7V4z" fill="#c8c8c8"/></svg>
<div class="abs" style="left:995px;top:8px;width:1px;height:2px;background:#8a8a8a"></div><div class="abs" style="left:1006px;top:8px;width:1px;height:2px;background:#8a8a8a"></div><div class="abs" style="left:1018px;top:8px;width:1px;height:2px;background:#777"></div><div class="abs" style="left:987px;top:8px;width:1px;height:2px;background:#777"></div>
</div>
<div id="bottom"><div id="binner">
<div id="tabbar">
<div class="seg" style="left:6px;width:43px;background:#3f6ba6;border-radius:3px 0 0 3px">Track</div>
<div class="seg" style="left:49px;width:49px;background:#3a3a3a;border-radius:0 3px 3px 0">Master</div>
<div class="seg" style="left:106px;width:50px;background:#535353;border-radius:3px;color:#a8a8a8;box-shadow:0 0 0 .5px #5e5e5e">Compare</div>
<div class="seg" style="left:473.500px;width:56.500px;background:#3f6ba6;border-radius:3px 0 0 3px">Controls</div>
<div class="seg" style="left:530px;width:32px;background:#3a3a3a;border-radius:0 3px 3px 0">EQ</div>
</div>
<div id="insp">
<div class="card" style="top:9px;height:95px">
<svg class="abs" style="left:7px;top:11px" width="8" height="7" viewBox="0 0 8 7"><path d="M.3.500h7.400L4 6.500z" fill="#eee"/></svg>
<div class="abs" style="left:18px;top:8.700px;font-size:10px;line-height:13px;color:#f4f4f4;white-space:nowrap">Keyboard Sensitivity</div>
<div class="abs" style="left:11px;top:37.500px;width:199px;height:2px;border-radius:1px;background:#2d2d2d"></div>
<div class="abs" style="left:15.5px;top:43px;width:1px;height:1.500px;background:#8a8a8a"></div>
<div class="abs" style="left:46.8px;top:43px;width:1px;height:1.500px;background:#8a8a8a"></div>
<div class="abs" style="left:78.1px;top:43px;width:1px;height:1.500px;background:#8a8a8a"></div>
<div class="abs" style="left:110px;top:43px;width:1px;height:1.500px;background:#8a8a8a"></div>
<div class="abs" style="left:141.5px;top:43px;width:1px;height:1.500px;background:#8a8a8a"></div>
<div class="abs" style="left:172.8px;top:43px;width:1px;height:1.500px;background:#8a8a8a"></div>
<div class="abs" style="left:204.2px;top:43px;width:1px;height:1.500px;background:#8a8a8a"></div>
<svg class="abs" style="left:105.500px;top:31.500px" width="11" height="13" viewBox="0 0 11 13"><path d="M1 2q0-1.500 1.500-1.500h6Q10 .5 10 2v5.500L5.500 12 1 7.500z" fill="#a9a9a9" stroke="#cfcfcf" stroke-width=".6"/></svg>
<div class="abs sl" style="left:10px;top:47.500px">Less</div><div class="abs sl" style="left:60.500px;width:100px;text-align:center;top:47.500px">Neutral</div><div class="abs sl" style="right:9.500px;top:47.500px">More</div>
<div class="abs" style="left:10.500px;top:67.200px;width:205px;font-size:8.800px;line-height:10.200px;color:#c2c2c2">Drag the slider to adjust the velocity level of notes you play.</div>
</div>
<div class="card" style="top:114px;height:27px">
<svg class="abs" style="left:7px;top:10px" width="7" height="8" viewBox="0 0 7 8"><path d="M.5.300v7.400L6.500 4z" fill="#eee"/></svg>
<div class="abs" style="left:18px;top:8px;font-size:10px;line-height:13px;color:#f4f4f4;white-space:nowrap">Plug-ins</div>
</div>
</div>
<div class="abs" style="left:376px;top:21px;width:524px;height:168px"><svg class="abs" style="left:0;top:0" width="524" height="168" viewBox="0 0 524 168"><defs>
<linearGradient id="woodg" x1="0" y1="0" x2="1" y2="0"><stop offset="0" stop-color="#86491f"/><stop offset=".1" stop-color="#995a2b"/><stop offset=".4" stop-color="#9f5f2d"/><stop offset=".7" stop-color="#955629"/><stop offset=".9" stop-color="#8c5027"/><stop offset="1" stop-color="#84481f"/></linearGradient>
<linearGradient id="woodv" x1="0" y1="0" x2="0" y2="1"><stop offset="0" stop-color="#3a1a06" stop-opacity=".6"/><stop offset=".04" stop-color="#3a1a06" stop-opacity=".3"/><stop offset=".13" stop-color="#3a1a06" stop-opacity="0"/><stop offset=".4" stop-color="#3a1a06" stop-opacity="0"/><stop offset=".75" stop-color="#3a1a06" stop-opacity=".14"/><stop offset=".92" stop-color="#3a1a06" stop-opacity=".22"/><stop offset="1" stop-color="#3a1a06" stop-opacity=".45"/></linearGradient>
<linearGradient id="woodh" x1="0" y1="0" x2="1" y2="0"><stop offset="0" stop-color="#3a1a06" stop-opacity=".55"/><stop offset=".015" stop-color="#3a1a06" stop-opacity=".3"/><stop offset=".06" stop-color="#3a1a06" stop-opacity="0"/><stop offset=".93" stop-color="#3a1a06" stop-opacity="0"/><stop offset=".985" stop-color="#3a1a06" stop-opacity=".35"/><stop offset="1" stop-color="#3a1a06" stop-opacity=".6"/></linearGradient>
<filter id="grain" x="0" y="0" width="100%" height="100%"><feTurbulence type="fractalNoise" baseFrequency="0.004 0.2" numOctaves="3" seed="4" result="n"/><feColorMatrix type="matrix" values="0 0 0 0 0.2  0 0 0 0 0.08  0 0 0 0 0.02  0 0 0 -2.6 1.45"/></filter>
</defs><rect width="524" height="168" fill="url(#woodg)"/><rect width="524" height="168" filter="url(#grain)"/><rect width="524" height="168" fill="url(#woodv)"/><rect width="524" height="168" fill="url(#woodh)"/><rect x="6.5" y="18.5" width="275" height="143" rx="5" fill="none" stroke="#1e0d04" stroke-width="1.200"/><rect x="291.5" y="18.5" width="107" height="143" rx="5" fill="none" stroke="#1e0d04" stroke-width="1.200"/><rect x="408.5" y="18.5" width="109" height="143" rx="5" fill="none" stroke="#1e0d04" stroke-width="1.200"/><text x="144" y="12.7" font-size="10.4" text-anchor="middle" font-weight="bold" fill="#160a03" stroke="#160a03" stroke-width="0.4" font-family="Liberation Sans, sans-serif">MIX</text><text x="344.8" y="12.7" font-size="10.4" text-anchor="middle" font-weight="bold" fill="#160a03" stroke="#160a03" stroke-width="0.4" font-family="Liberation Sans, sans-serif">COMPRESSION</text><text x="462.6" y="12.7" font-size="10.4" text-anchor="middle" font-weight="bold" fill="#160a03" stroke="#160a03" stroke-width="0.4" font-family="Liberation Sans, sans-serif">EFFECTS</text><text x="41.8" y="28.9" font-size="7" text-anchor="middle" font-weight="bold" fill="#160a03" stroke="#160a03" stroke-width="0.3" font-family="Liberation Sans, sans-serif">KICK</text><circle cx="29.4" cy="79.68" r=".55" fill="#2e1606" opacity=".75"/><circle cx="20.32" cy="70.6" r=".55" fill="#2e1606" opacity=".75"/><circle cx="17" cy="58.2" r=".55" fill="#2e1606" opacity=".75"/><circle cx="20.32" cy="45.8" r=".55" fill="#2e1606" opacity=".75"/><circle cx="29.4" cy="36.72" r=".55" fill="#2e1606" opacity=".75"/><circle cx="41.8" cy="33.4" r=".55" fill="#2e1606" opacity=".75"/><circle cx="54.2" cy="36.72" r=".55" fill="#2e1606" opacity=".75"/><circle cx="63.28" cy="45.8" r=".55" fill="#2e1606" opacity=".75"/><circle cx="66.6" cy="58.2" r=".55" fill="#2e1606" opacity=".75"/><circle cx="63.28" cy="70.6" r=".55" fill="#2e1606" opacity=".75"/><circle cx="54.2" cy="79.68" r=".55" fill="#2e1606" opacity=".75"/><text x="130.7" y="28.9" font-size="7" text-anchor="middle" font-weight="bold" fill="#160a03" stroke="#160a03" stroke-width="0.3" font-family="Liberation Sans, sans-serif">SNARE</text><circle cx="118.3" cy="79.68" r=".55" fill="#2e1606" opacity=".75"/><circle cx="109.22" cy="70.6" r=".55" fill="#2e1606" opacity=".75"/><circle cx="105.9" cy="58.2" r=".55" fill="#2e1606" opacity=".75"/><circle cx="109.22" cy="45.8" r=".55" fill="#2e1606" opacity=".75"/><circle cx="118.3" cy="36.72" r=".55" fill="#2e1606" opacity=".75"/><circle cx="130.7" cy="33.4" r=".55" fill="#2e1606" opacity=".75"/><circle cx="143.1" cy="36.72" r=".55" fill="#2e1606" opacity=".75"/><circle cx="152.18" cy="45.8" r=".55" fill="#2e1606" opacity=".75"/><circle cx="155.5" cy="58.2" r=".55" fill="#2e1606" opacity=".75"/><circle cx="152.18" cy="70.6" r=".55" fill="#2e1606" opacity=".75"/><circle cx="143.1" cy="79.68" r=".55" fill="#2e1606" opacity=".75"/><text x="223.2" y="28.9" font-size="7" text-anchor="middle" font-weight="bold" fill="#160a03" stroke="#160a03" stroke-width="0.3" font-family="Liberation Sans, sans-serif">TOMS</text><circle cx="210.8" cy="79.68" r=".55" fill="#2e1606" opacity=".75"/><circle cx="201.72" cy="70.6" r=".55" fill="#2e1606" opacity=".75"/><circle cx="198.4" cy="58.2" r=".55" fill="#2e1606" opacity=".75"/><circle cx="201.72" cy="45.8" r=".55" fill="#2e1606" opacity=".75"/><circle cx="210.8" cy="36.72" r=".55" fill="#2e1606" opacity=".75"/><circle cx="223.2" cy="33.4" r=".55" fill="#2e1606" opacity=".75"/><circle cx="235.6" cy="36.72" r=".55" fill="#2e1606" opacity=".75"/><circle cx="244.68" cy="45.8" r=".55" fill="#2e1606" opacity=".75"/><circle cx="248" cy="58.2" r=".55" fill="#2e1606" opacity=".75"/><circle cx="244.68" cy="70.6" r=".55" fill="#2e1606" opacity=".75"/><circle cx="235.6" cy="79.68" r=".55" fill="#2e1606" opacity=".75"/><text x="41.8" y="100.2" font-size="7" text-anchor="middle" font-weight="bold" fill="#160a03" stroke="#160a03" stroke-width="0.3" font-family="Liberation Sans, sans-serif">HI-HAT</text><circle cx="28.97" cy="152.73" r=".55" fill="#2e1606" opacity=".75"/><circle cx="19.57" cy="143.33" r=".55" fill="#2e1606" opacity=".75"/><circle cx="16.13" cy="130.5" r=".55" fill="#2e1606" opacity=".75"/><circle cx="19.57" cy="117.67" r=".55" fill="#2e1606" opacity=".75"/><circle cx="28.97" cy="108.27" r=".55" fill="#2e1606" opacity=".75"/><circle cx="41.8" cy="104.83" r=".55" fill="#2e1606" opacity=".75"/><circle cx="54.63" cy="108.27" r=".55" fill="#2e1606" opacity=".75"/><circle cx="64.03" cy="117.67" r=".55" fill="#2e1606" opacity=".75"/><circle cx="67.47" cy="130.5" r=".55" fill="#2e1606" opacity=".75"/><circle cx="64.03" cy="143.33" r=".55" fill="#2e1606" opacity=".75"/><circle cx="54.63" cy="152.73" r=".55" fill="#2e1606" opacity=".75"/><text x="130.7" y="100.2" font-size="7" text-anchor="middle" font-weight="bold" fill="#160a03" stroke="#160a03" stroke-width="0.3" font-family="Liberation Sans, sans-serif">CYMBALS</text><circle cx="117.87" cy="152.73" r=".55" fill="#2e1606" opacity=".75"/><circle cx="108.47" cy="143.33" r=".55" fill="#2e1606" opacity=".75"/><circle cx="105.03" cy="130.5" r=".55" fill="#2e1606" opacity=".75"/><circle cx="108.47" cy="117.67" r=".55" fill="#2e1606" opacity=".75"/><circle cx="117.87" cy="108.27" r=".55" fill="#2e1606" opacity=".75"/><circle cx="130.7" cy="104.83" r=".55" fill="#2e1606" opacity=".75"/><circle cx="143.53" cy="108.27" r=".55" fill="#2e1606" opacity=".75"/><circle cx="152.93" cy="117.67" r=".55" fill="#2e1606" opacity=".75"/><circle cx="156.37" cy="130.5" r=".55" fill="#2e1606" opacity=".75"/><circle cx="152.93" cy="143.33" r=".55" fill="#2e1606" opacity=".75"/><circle cx="143.53" cy="152.73" r=".55" fill="#2e1606" opacity=".75"/><text x="223.2" y="100.2" font-size="7" text-anchor="middle" font-weight="bold" fill="#160a03" stroke="#160a03" stroke-width="0.3" font-family="Liberation Sans, sans-serif">PERCUSSION</text><circle cx="210.37" cy="152.73" r=".55" fill="#2e1606" opacity=".75"/><circle cx="200.97" cy="143.33" r=".55" fill="#2e1606" opacity=".75"/><circle cx="197.53" cy="130.5" r=".55" fill="#2e1606" opacity=".75"/><circle cx="200.97" cy="117.67" r=".55" fill="#2e1606" opacity=".75"/><circle cx="210.37" cy="108.27" r=".55" fill="#2e1606" opacity=".75"/><circle cx="223.2" cy="104.83" r=".55" fill="#2e1606" opacity=".75"/><circle cx="236.03" cy="108.27" r=".55" fill="#2e1606" opacity=".75"/><circle cx="245.43" cy="117.67" r=".55" fill="#2e1606" opacity=".75"/><circle cx="248.87" cy="130.5" r=".55" fill="#2e1606" opacity=".75"/><circle cx="245.43" cy="143.33" r=".55" fill="#2e1606" opacity=".75"/><circle cx="236.03" cy="152.73" r=".55" fill="#2e1606" opacity=".75"/><text x="344.8" y="28.9" font-size="7" text-anchor="middle" font-weight="bold" fill="#160a03" stroke="#160a03" stroke-width="0.3" font-family="Liberation Sans, sans-serif">AMOUNT</text><circle cx="332.4" cy="80.08" r=".55" fill="#2e1606" opacity=".75"/><circle cx="323.32" cy="71" r=".55" fill="#2e1606" opacity=".75"/><circle cx="320" cy="58.6" r=".55" fill="#2e1606" opacity=".75"/><circle cx="323.32" cy="46.2" r=".55" fill="#2e1606" opacity=".75"/><circle cx="332.4" cy="37.12" r=".55" fill="#2e1606" opacity=".75"/><circle cx="344.8" cy="33.8" r=".55" fill="#2e1606" opacity=".75"/><circle cx="357.2" cy="37.12" r=".55" fill="#2e1606" opacity=".75"/><circle cx="366.28" cy="46.2" r=".55" fill="#2e1606" opacity=".75"/><circle cx="369.6" cy="58.6" r=".55" fill="#2e1606" opacity=".75"/><circle cx="366.28" cy="71" r=".55" fill="#2e1606" opacity=".75"/><circle cx="357.2" cy="80.08" r=".55" fill="#2e1606" opacity=".75"/><text x="344.8" y="110.9" font-size="7" text-anchor="middle" font-weight="bold" fill="#160a03" stroke="#160a03" stroke-width="0.3" font-family="Liberation Sans, sans-serif">ON</text><text x="462.6" y="28.9" font-size="7" text-anchor="middle" font-weight="bold" fill="#160a03" stroke="#160a03" stroke-width="0.3" font-family="Liberation Sans, sans-serif">TONE</text><circle cx="450.2" cy="80.08" r=".55" fill="#2e1606" opacity=".75"/><circle cx="441.12" cy="71" r=".55" fill="#2e1606" opacity=".75"/><circle cx="437.8" cy="58.6" r=".55" fill="#2e1606" opacity=".75"/><circle cx="441.12" cy="46.2" r=".55" fill="#2e1606" opacity=".75"/><circle cx="450.2" cy="37.12" r=".55" fill="#2e1606" opacity=".75"/><circle cx="462.6" cy="33.8" r=".55" fill="#2e1606" opacity=".75"/><circle cx="475" cy="37.12" r=".55" fill="#2e1606" opacity=".75"/><circle cx="484.08" cy="46.2" r=".55" fill="#2e1606" opacity=".75"/><circle cx="487.4" cy="58.6" r=".55" fill="#2e1606" opacity=".75"/><circle cx="484.08" cy="71" r=".55" fill="#2e1606" opacity=".75"/><circle cx="475" cy="80.08" r=".55" fill="#2e1606" opacity=".75"/><text x="462.6" y="100.2" font-size="7" text-anchor="middle" font-weight="bold" fill="#160a03" stroke="#160a03" stroke-width="0.3" font-family="Liberation Sans, sans-serif">ROOM</text><circle cx="449.77" cy="153.23" r=".55" fill="#2e1606" opacity=".75"/><circle cx="440.37" cy="143.83" r=".55" fill="#2e1606" opacity=".75"/><circle cx="436.93" cy="131" r=".55" fill="#2e1606" opacity=".75"/><circle cx="440.37" cy="118.17" r=".55" fill="#2e1606" opacity=".75"/><circle cx="449.77" cy="108.77" r=".55" fill="#2e1606" opacity=".75"/><circle cx="462.6" cy="105.33" r=".55" fill="#2e1606" opacity=".75"/><circle cx="475.43" cy="108.77" r=".55" fill="#2e1606" opacity=".75"/><circle cx="484.83" cy="118.17" r=".55" fill="#2e1606" opacity=".75"/><circle cx="488.27" cy="131" r=".55" fill="#2e1606" opacity=".75"/><circle cx="484.83" cy="143.83" r=".55" fill="#2e1606" opacity=".75"/><circle cx="475.43" cy="153.23" r=".55" fill="#2e1606" opacity=".75"/></svg><div class="kn" style="left:20.8px;top:37.2px"><b></b><i style="left:19.7px;top:0.5px"></i></div><div class="led" style="left:72.6px;top:48.2px;width:18.4px;height:18.4px"><b style="left:2.85px;top:2.85px;width:12.7px;height:12.7px"></b></div><div class="kn" style="left:109.7px;top:37.2px"><b></b><i style="left:33.28px;top:6.12px"></i></div><div class="led" style="left:161.8px;top:48.2px;width:18.4px;height:18.4px"><b style="left:2.85px;top:2.85px;width:12.7px;height:12.7px"></b></div><div class="kn" style="left:202.2px;top:37.2px"><b></b><i style="left:19.7px;top:0.5px"></i></div><div class="led" style="left:254.3px;top:48.2px;width:18.4px;height:18.4px"><b style="left:2.85px;top:2.85px;width:12.7px;height:12.7px"></b></div><div class="kn" style="left:20.8px;top:109.5px;transform:scale(1.035)"><b></b><i style="left:19.7px;top:0.5px"></i></div><div class="led" style="left:72.6px;top:120.5px;width:18.4px;height:18.4px"><b style="left:2.85px;top:2.85px;width:12.7px;height:12.7px"></b></div><div class="kn" style="left:109.7px;top:109.5px;transform:scale(1.035)"><b></b><i style="left:19.7px;top:0.5px"></i></div><div class="led" style="left:161.8px;top:120.5px;width:18.4px;height:18.4px"><b style="left:2.85px;top:2.85px;width:12.7px;height:12.7px"></b></div><div class="kn" style="left:202.2px;top:109.5px;transform:scale(1.035)"><b></b><i style="left:19.7px;top:0.5px"></i></div><div class="led" style="left:254.3px;top:120.5px;width:18.4px;height:18.4px"><b style="left:2.85px;top:2.85px;width:12.7px;height:12.7px"></b></div><div class="kn" style="left:323.8px;top:37.6px"><b></b><i style="left:9.53px;top:35.98px;background:#c9c9c9;width:2.200px;height:2.200px"></i></div><div class="led" style="left:331.8px;top:117.3px;width:26px;height:26px"><b style="left:4.03px;top:4.03px;width:17.94px;height:17.94px"></b></div><div class="kn" style="left:441.6px;top:37.6px"><b></b><i style="left:9.53px;top:35.98px;background:#c9c9c9;width:2.200px;height:2.200px"></i></div><div class="kn" style="left:441.6px;top:110px;transform:scale(1.035)"><b></b><i style="left:9.53px;top:35.98px;background:#c9c9c9;width:2.200px;height:2.200px"></i></div></div>
</div></div>
</body>
</html>
